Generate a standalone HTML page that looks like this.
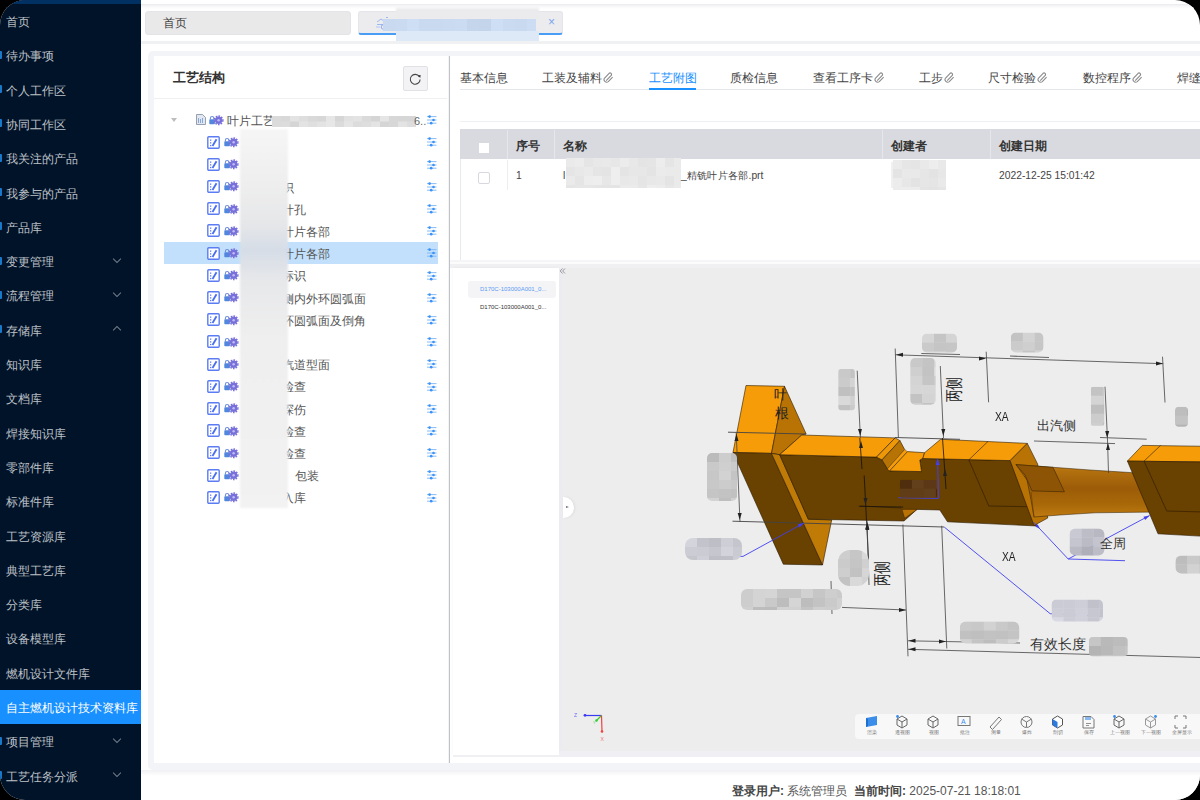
<!DOCTYPE html><html><head><meta charset="utf-8"><title>工艺附图</title><style>
*{box-sizing:border-box;margin:0;padding:0}
html,body{width:1200px;height:800px;overflow:hidden;background:#000;font-family:"Liberation Sans",sans-serif}
#app{position:absolute;left:0;top:0;width:1200px;height:800px;border-radius:25px;overflow:hidden;background:#fff}
.a{position:absolute}
i{display:inline-block;width:1em;text-align:center;font-style:normal}
#side{position:absolute;left:0;top:0;width:141px;height:800px;background:#001329;overflow:hidden}
.mi{position:absolute;left:6px;font-size:12px;line-height:14px;color:rgba(255,255,255,.74);white-space:nowrap}
.chev{position:absolute;left:114px;width:6px;height:6px;border-right:1px solid rgba(255,255,255,.45);border-bottom:1px solid rgba(255,255,255,.45);transform:rotate(45deg)}
.chev.up{transform:rotate(-135deg)}
.ico{position:absolute;left:0;width:2px;height:8px;background:#1a78c8;border-radius:0 1px 1px 0}
.t{position:absolute;white-space:nowrap;font-size:12px;line-height:14px;color:#333}
.sl{position:absolute;left:427px;width:11px;height:10px}
</style></head><body><div id="app">
<div id="side"><div class="a" style="left:0;top:0;width:141px;height:4px;background:#003162"></div>
<div class="mi" style="top:15.0px"><i>首</i><i>页</i></div>
<div class="mi" style="top:49.3px"><i>待</i><i>办</i><i>事</i><i>项</i></div>
<div class="ico" style="top:50.8px"></div>
<div class="mi" style="top:83.6px"><i>个</i><i>人</i><i>工</i><i>作</i><i>区</i></div>
<div class="ico" style="top:85.1px"></div>
<div class="mi" style="top:117.9px"><i>协</i><i>同</i><i>工</i><i>作</i><i>区</i></div>
<div class="ico" style="top:119.4px"></div>
<div class="mi" style="top:152.2px"><i>我</i><i>关</i><i>注</i><i>的</i><i>产</i><i>品</i></div>
<div class="ico" style="top:153.7px"></div>
<div class="mi" style="top:186.5px"><i>我</i><i>参</i><i>与</i><i>的</i><i>产</i><i>品</i></div>
<div class="ico" style="top:188.0px"></div>
<div class="mi" style="top:220.8px"><i>产</i><i>品</i><i>库</i></div>
<div class="ico" style="top:222.3px"></div>
<div class="mi" style="top:255.1px"><i>变</i><i>更</i><i>管</i><i>理</i></div>
<div class="ico" style="top:256.6px"></div>
<div class="chev" style="top:255.6px"></div>
<div class="mi" style="top:289.4px"><i>流</i><i>程</i><i>管</i><i>理</i></div>
<div class="ico" style="top:290.9px"></div>
<div class="chev" style="top:289.9px"></div>
<div class="mi" style="top:323.7px"><i>存</i><i>储</i><i>库</i></div>
<div class="ico" style="top:325.2px"></div>
<div class="chev up" style="top:327.2px"></div>
<div class="mi" style="top:358.0px"><i>知</i><i>识</i><i>库</i></div>
<div class="mi" style="top:392.3px"><i>文</i><i>档</i><i>库</i></div>
<div class="mi" style="top:426.6px"><i>焊</i><i>接</i><i>知</i><i>识</i><i>库</i></div>
<div class="mi" style="top:460.9px"><i>零</i><i>部</i><i>件</i><i>库</i></div>
<div class="mi" style="top:495.2px"><i>标</i><i>准</i><i>件</i><i>库</i></div>
<div class="mi" style="top:529.5px"><i>工</i><i>艺</i><i>资</i><i>源</i><i>库</i></div>
<div class="mi" style="top:563.8px"><i>典</i><i>型</i><i>工</i><i>艺</i><i>库</i></div>
<div class="mi" style="top:598.1px"><i>分</i><i>类</i><i>库</i></div>
<div class="mi" style="top:632.4px"><i>设</i><i>备</i><i>模</i><i>型</i><i>库</i></div>
<div class="mi" style="top:666.7px"><i>燃</i><i>机</i><i>设</i><i>计</i><i>文</i><i>件</i><i>库</i></div>
<div class="a" style="left:0;top:689.5px;width:141px;height:34px;background:#1890ff"></div>
<div class="mi" style="top:701.0px;color:#fff"><i>自</i><i>主</i><i>燃</i><i>机</i><i>设</i><i>计</i><i>技</i><i>术</i><i>资</i><i>料</i><i>库</i></div>
<div class="mi" style="top:735.3px"><i>项</i><i>目</i><i>管</i><i>理</i></div>
<div class="ico" style="top:736.8px"></div>
<div class="chev" style="top:735.8px"></div>
<div class="mi" style="top:769.6px"><i>工</i><i>艺</i><i>任</i><i>务</i><i>分</i><i>派</i></div>
<div class="ico" style="top:771.1px"></div>
<div class="chev" style="top:770.1px"></div>
</div>
<div class="a" style="left:141px;top:3.5px;width:1059px;height:5px;background:linear-gradient(180deg,#eaebee,#f6f6f8 40%,#fff)"></div>
<div class="a" style="left:145px;top:11px;width:206px;height:24px;background:#e9e9e9;border-radius:3px;border:1px solid #e4e4e8"></div>
<div class="t" style="left:163px;top:16px;color:#444"><i>首</i><i>页</i></div>
<div class="a" style="left:358px;top:11px;width:205px;height:24px;background:#ececee;border-radius:3px;border:1px solid #e4e4ea;border-bottom:2px solid #4a9df5"></div>
<div class="a" style="left:548px;top:15px;font-size:12px;line-height:14px;color:#7aa6f0">×</div>
<svg class="a" style="left:375px;top:16px" width="18" height="14"><path d="M2 6 L6 3 L10 6 M2 8.5 H9" fill="none" stroke="#9bb8f2" stroke-width="1"/><path d="M11 1.5 H13" stroke="#9bb8f2" stroke-width="1"/><circle cx="8.5" cy="11" r="2.3" fill="none" stroke="#8fa8f0" stroke-width="1"/><path d="M1 11 H5" stroke="#b0c4f4" stroke-width="1"/><rect x="14.5" y="8" width="2.5" height="5" fill="#6f93ea"/></svg>
<div class="a" style="left:396px;top:8px;width:143px;height:11px;background:#ebebed;filter:blur(1px)"></div>
<svg class="a" style="left:383.0px;top:19.0px;filter:blur(0.3px)" width="153.0" height="12.0"><rect x="0.0" y="0.0" width="12.5" height="12.5" fill="rgb(201,217,240)"/><rect x="12.0" y="0.0" width="12.5" height="12.5" fill="rgb(202,218,241)"/><rect x="24.0" y="0.0" width="12.5" height="12.5" fill="rgb(206,222,245)"/><rect x="36.0" y="0.0" width="12.5" height="12.5" fill="rgb(201,217,240)"/><rect x="48.0" y="0.0" width="12.5" height="12.5" fill="rgb(201,217,240)"/><rect x="60.0" y="0.0" width="12.5" height="12.5" fill="rgb(202,218,241)"/><rect x="72.0" y="0.0" width="12.5" height="12.5" fill="rgb(203,219,242)"/><rect x="84.0" y="0.0" width="12.5" height="12.5" fill="rgb(197,213,236)"/><rect x="96.0" y="0.0" width="12.5" height="12.5" fill="rgb(196,212,235)"/><rect x="108.0" y="0.0" width="12.5" height="12.5" fill="rgb(206,222,245)"/><rect x="120.0" y="0.0" width="12.5" height="12.5" fill="rgb(202,218,241)"/><rect x="132.0" y="0.0" width="12.5" height="12.5" fill="rgb(201,217,240)"/><rect x="144.0" y="0.0" width="12.5" height="12.5" fill="rgb(204,220,243)"/></svg>
<div class="a" style="left:396px;top:31px;width:143px;height:11px;background:#dde9f7;filter:blur(.6px)"></div>
<div class="a" style="left:141px;top:41px;width:1059px;height:3px;background:#f0f1f3"></div>
<div class="a" style="left:148px;top:51px;width:1060px;height:719px;background:#f3f4f7;border-radius:5px"></div>
<div class="a" style="left:154px;top:56px;width:294px;height:707px;background:#fff"></div>
<div class="t" style="left:173px;top:70px;font-size:13px;line-height:15px;font-weight:bold;color:#333"><i>工</i><i>艺</i><i>结</i><i>构</i></div>
<div class="a" style="left:403px;top:66px;width:25px;height:25px;background:#f3f3f5;border:1px solid #e0e1e5;border-radius:2px"></div>
<svg class="a" style="left:403px;top:66px" width="25" height="25"><path d="M16.3 10.6 A4.9 4.9 0 1 0 17.1 13.4" fill="none" stroke="#484848" stroke-width="1.1"/><path d="M14.8 9.6 L17.6 9.1 L17.3 11.9 Z" fill="#333"/></svg>
<div class="a" style="left:154px;top:98px;width:293px;height:1px;background:#eef0f4"></div>
<div class="a" style="left:171px;top:118px;width:0;height:0;border-left:3.5px solid transparent;border-right:3.5px solid transparent;border-top:4.5px solid #bdbdbd"></div>
<svg class="a" style="left:196px;top:114px" width="10" height="11"><path d="M0.5 0.5H6.5L9.5 3.5V10.5H0.5Z" fill="#e3e8f0" stroke="#8a96a8" stroke-width="0.9"/><path d="M2.5 4V9M4.5 5V9M6.5 4V9" stroke="#7da0d8" stroke-width="0.9"/></svg>
<svg class="a" style="left:208.5px;top:115.0px" width="15" height="11"><rect x="0.3" y="4.3" width="5.6" height="5" rx="0.8" fill="#5286de"/><path d="M1.4 4.6 V3.2 A1.7 1.7 0 0 1 4.8 3.2 V4.6" fill="none" stroke="#6d8fd8" stroke-width="1.1"/><circle cx="9.6" cy="5.3" r="3.7" fill="#7870da"/><circle cx="9.6" cy="5.3" r="4.3" fill="none" stroke="#7870da" stroke-width="1.4" stroke-dasharray="1.6 1.2"/><circle cx="9.6" cy="5.3" r="1.2" fill="#c0bcf2"/></svg>
<div class="t" style="left:227px;top:113.5px;color:#555"><i>叶</i><i>片</i><i>工</i><i>艺</i></div>
<svg class="a" style="left:272.0px;top:116.0px;filter:blur(0.3px)" width="144.0" height="11.0"><rect x="0.0" y="0.0" width="9.5" height="6.0" fill="rgb(218,218,218)"/><rect x="9.0" y="0.0" width="9.5" height="6.0" fill="rgb(216,216,216)"/><rect x="18.0" y="0.0" width="9.5" height="6.0" fill="rgb(227,227,227)"/><rect x="27.0" y="0.0" width="9.5" height="6.0" fill="rgb(222,222,222)"/><rect x="36.0" y="0.0" width="9.5" height="6.0" fill="rgb(217,217,217)"/><rect x="45.0" y="0.0" width="9.5" height="6.0" fill="rgb(215,215,215)"/><rect x="54.0" y="0.0" width="9.5" height="6.0" fill="rgb(230,230,230)"/><rect x="63.0" y="0.0" width="9.5" height="6.0" fill="rgb(214,214,214)"/><rect x="72.0" y="0.0" width="9.5" height="6.0" fill="rgb(225,225,225)"/><rect x="81.0" y="0.0" width="9.5" height="6.0" fill="rgb(227,227,227)"/><rect x="90.0" y="0.0" width="9.5" height="6.0" fill="rgb(218,218,218)"/><rect x="99.0" y="0.0" width="9.5" height="6.0" fill="rgb(213,213,213)"/><rect x="108.0" y="0.0" width="9.5" height="6.0" fill="rgb(229,229,229)"/><rect x="117.0" y="0.0" width="9.5" height="6.0" fill="rgb(215,215,215)"/><rect x="126.0" y="0.0" width="9.5" height="6.0" fill="rgb(214,214,214)"/><rect x="135.0" y="0.0" width="9.5" height="6.0" fill="rgb(214,214,214)"/><rect x="0.0" y="5.5" width="9.5" height="6.0" fill="rgb(219,219,219)"/><rect x="9.0" y="5.5" width="9.5" height="6.0" fill="rgb(220,220,220)"/><rect x="18.0" y="5.5" width="9.5" height="6.0" fill="rgb(213,213,213)"/><rect x="27.0" y="5.5" width="9.5" height="6.0" fill="rgb(227,227,227)"/><rect x="36.0" y="5.5" width="9.5" height="6.0" fill="rgb(223,223,223)"/><rect x="45.0" y="5.5" width="9.5" height="6.0" fill="rgb(227,227,227)"/><rect x="54.0" y="5.5" width="9.5" height="6.0" fill="rgb(231,231,231)"/><rect x="63.0" y="5.5" width="9.5" height="6.0" fill="rgb(219,219,219)"/><rect x="72.0" y="5.5" width="9.5" height="6.0" fill="rgb(229,229,229)"/><rect x="81.0" y="5.5" width="9.5" height="6.0" fill="rgb(220,220,220)"/><rect x="90.0" y="5.5" width="9.5" height="6.0" fill="rgb(222,222,222)"/><rect x="99.0" y="5.5" width="9.5" height="6.0" fill="rgb(228,228,228)"/><rect x="108.0" y="5.5" width="9.5" height="6.0" fill="rgb(213,213,213)"/><rect x="117.0" y="5.5" width="9.5" height="6.0" fill="rgb(215,215,215)"/><rect x="126.0" y="5.5" width="9.5" height="6.0" fill="rgb(227,227,227)"/><rect x="135.0" y="5.5" width="9.5" height="6.0" fill="rgb(221,221,221)"/></svg>
<div class="t" style="left:414px;top:113.5px;color:#666;font-size:11px">6..</div>
<svg class="sl" style="top:115.2px" width="11" height="10"><g stroke="#79b4f8" stroke-width="0.9"><path d="M0 1.6H9.5M0 5H9.5M0 8.2H9.5"/></g><g fill="#3d92f5"><circle cx="2.6" cy="1.6" r="1.35"/><circle cx="6.5" cy="5" r="1.35"/><circle cx="4.2" cy="8.2" r="1.35"/></g></svg>
<svg class="a" style="left:207px;top:135.6px" width="13" height="13"><rect x="0.8" y="0.8" width="11.4" height="11.4" rx="1" fill="#fff" stroke="#5b7cf2" stroke-width="1.4"/><rect x="3" y="3.5" width="1.3" height="1.3" fill="#5b7cf2"/><rect x="3" y="6.2" width="1.3" height="1.3" fill="#5b7cf2"/><rect x="3" y="8.9" width="1.3" height="1.3" fill="#5b7cf2"/><path d="M5.5 10 L9.5 3.2" stroke="#4a6ef0" stroke-width="1.8"/></svg>
<svg class="a" style="left:224.0px;top:136.9px" width="15" height="11"><rect x="0.3" y="4.3" width="5.6" height="5" rx="0.8" fill="#5286de"/><path d="M1.4 4.6 V3.2 A1.7 1.7 0 0 1 4.8 3.2 V4.6" fill="none" stroke="#6d8fd8" stroke-width="1.1"/><circle cx="9.6" cy="5.3" r="3.7" fill="#7870da"/><circle cx="9.6" cy="5.3" r="4.3" fill="none" stroke="#7870da" stroke-width="1.4" stroke-dasharray="1.6 1.2"/><circle cx="9.6" cy="5.3" r="1.2" fill="#c0bcf2"/></svg>
<svg class="sl" style="top:137.4px" width="11" height="10"><g stroke="#79b4f8" stroke-width="0.9"><path d="M0 1.6H9.5M0 5H9.5M0 8.2H9.5"/></g><g fill="#3d92f5"><circle cx="2.6" cy="1.6" r="1.35"/><circle cx="6.5" cy="5" r="1.35"/><circle cx="4.2" cy="8.2" r="1.35"/></g></svg>
<svg class="a" style="left:207px;top:157.8px" width="13" height="13"><rect x="0.8" y="0.8" width="11.4" height="11.4" rx="1" fill="#fff" stroke="#5b7cf2" stroke-width="1.4"/><rect x="3" y="3.5" width="1.3" height="1.3" fill="#5b7cf2"/><rect x="3" y="6.2" width="1.3" height="1.3" fill="#5b7cf2"/><rect x="3" y="8.9" width="1.3" height="1.3" fill="#5b7cf2"/><path d="M5.5 10 L9.5 3.2" stroke="#4a6ef0" stroke-width="1.8"/></svg>
<svg class="a" style="left:224.0px;top:159.1px" width="15" height="11"><rect x="0.3" y="4.3" width="5.6" height="5" rx="0.8" fill="#5286de"/><path d="M1.4 4.6 V3.2 A1.7 1.7 0 0 1 4.8 3.2 V4.6" fill="none" stroke="#6d8fd8" stroke-width="1.1"/><circle cx="9.6" cy="5.3" r="3.7" fill="#7870da"/><circle cx="9.6" cy="5.3" r="4.3" fill="none" stroke="#7870da" stroke-width="1.4" stroke-dasharray="1.6 1.2"/><circle cx="9.6" cy="5.3" r="1.2" fill="#c0bcf2"/></svg>
<svg class="sl" style="top:159.6px" width="11" height="10"><g stroke="#79b4f8" stroke-width="0.9"><path d="M0 1.6H9.5M0 5H9.5M0 8.2H9.5"/></g><g fill="#3d92f5"><circle cx="2.6" cy="1.6" r="1.35"/><circle cx="6.5" cy="5" r="1.35"/><circle cx="4.2" cy="8.2" r="1.35"/></g></svg>
<svg class="a" style="left:207px;top:180.0px" width="13" height="13"><rect x="0.8" y="0.8" width="11.4" height="11.4" rx="1" fill="#fff" stroke="#5b7cf2" stroke-width="1.4"/><rect x="3" y="3.5" width="1.3" height="1.3" fill="#5b7cf2"/><rect x="3" y="6.2" width="1.3" height="1.3" fill="#5b7cf2"/><rect x="3" y="8.9" width="1.3" height="1.3" fill="#5b7cf2"/><path d="M5.5 10 L9.5 3.2" stroke="#4a6ef0" stroke-width="1.8"/></svg>
<svg class="a" style="left:224.0px;top:181.3px" width="15" height="11"><rect x="0.3" y="4.3" width="5.6" height="5" rx="0.8" fill="#5286de"/><path d="M1.4 4.6 V3.2 A1.7 1.7 0 0 1 4.8 3.2 V4.6" fill="none" stroke="#6d8fd8" stroke-width="1.1"/><circle cx="9.6" cy="5.3" r="3.7" fill="#7870da"/><circle cx="9.6" cy="5.3" r="4.3" fill="none" stroke="#7870da" stroke-width="1.4" stroke-dasharray="1.6 1.2"/><circle cx="9.6" cy="5.3" r="1.2" fill="#c0bcf2"/></svg>
<div class="t" style="left:282.4px;top:180.6px;color:#555"><i>识</i></div>
<svg class="sl" style="top:181.8px" width="11" height="10"><g stroke="#79b4f8" stroke-width="0.9"><path d="M0 1.6H9.5M0 5H9.5M0 8.2H9.5"/></g><g fill="#3d92f5"><circle cx="2.6" cy="1.6" r="1.35"/><circle cx="6.5" cy="5" r="1.35"/><circle cx="4.2" cy="8.2" r="1.35"/></g></svg>
<svg class="a" style="left:207px;top:202.2px" width="13" height="13"><rect x="0.8" y="0.8" width="11.4" height="11.4" rx="1" fill="#fff" stroke="#5b7cf2" stroke-width="1.4"/><rect x="3" y="3.5" width="1.3" height="1.3" fill="#5b7cf2"/><rect x="3" y="6.2" width="1.3" height="1.3" fill="#5b7cf2"/><rect x="3" y="8.9" width="1.3" height="1.3" fill="#5b7cf2"/><path d="M5.5 10 L9.5 3.2" stroke="#4a6ef0" stroke-width="1.8"/></svg>
<svg class="a" style="left:224.0px;top:203.5px" width="15" height="11"><rect x="0.3" y="4.3" width="5.6" height="5" rx="0.8" fill="#5286de"/><path d="M1.4 4.6 V3.2 A1.7 1.7 0 0 1 4.8 3.2 V4.6" fill="none" stroke="#6d8fd8" stroke-width="1.1"/><circle cx="9.6" cy="5.3" r="3.7" fill="#7870da"/><circle cx="9.6" cy="5.3" r="4.3" fill="none" stroke="#7870da" stroke-width="1.4" stroke-dasharray="1.6 1.2"/><circle cx="9.6" cy="5.3" r="1.2" fill="#c0bcf2"/></svg>
<div class="t" style="left:282.4px;top:202.8px;color:#555"><i>叶</i><i>孔</i></div>
<svg class="sl" style="top:204.0px" width="11" height="10"><g stroke="#79b4f8" stroke-width="0.9"><path d="M0 1.6H9.5M0 5H9.5M0 8.2H9.5"/></g><g fill="#3d92f5"><circle cx="2.6" cy="1.6" r="1.35"/><circle cx="6.5" cy="5" r="1.35"/><circle cx="4.2" cy="8.2" r="1.35"/></g></svg>
<svg class="a" style="left:207px;top:224.4px" width="13" height="13"><rect x="0.8" y="0.8" width="11.4" height="11.4" rx="1" fill="#fff" stroke="#5b7cf2" stroke-width="1.4"/><rect x="3" y="3.5" width="1.3" height="1.3" fill="#5b7cf2"/><rect x="3" y="6.2" width="1.3" height="1.3" fill="#5b7cf2"/><rect x="3" y="8.9" width="1.3" height="1.3" fill="#5b7cf2"/><path d="M5.5 10 L9.5 3.2" stroke="#4a6ef0" stroke-width="1.8"/></svg>
<svg class="a" style="left:224.0px;top:225.7px" width="15" height="11"><rect x="0.3" y="4.3" width="5.6" height="5" rx="0.8" fill="#5286de"/><path d="M1.4 4.6 V3.2 A1.7 1.7 0 0 1 4.8 3.2 V4.6" fill="none" stroke="#6d8fd8" stroke-width="1.1"/><circle cx="9.6" cy="5.3" r="3.7" fill="#7870da"/><circle cx="9.6" cy="5.3" r="4.3" fill="none" stroke="#7870da" stroke-width="1.4" stroke-dasharray="1.6 1.2"/><circle cx="9.6" cy="5.3" r="1.2" fill="#c0bcf2"/></svg>
<div class="t" style="left:282.4px;top:225.0px;color:#555"><i>叶</i><i>片</i><i>各</i><i>部</i></div>
<svg class="sl" style="top:226.2px" width="11" height="10"><g stroke="#79b4f8" stroke-width="0.9"><path d="M0 1.6H9.5M0 5H9.5M0 8.2H9.5"/></g><g fill="#3d92f5"><circle cx="2.6" cy="1.6" r="1.35"/><circle cx="6.5" cy="5" r="1.35"/><circle cx="4.2" cy="8.2" r="1.35"/></g></svg>
<div class="a" style="left:164px;top:241.7px;width:274px;height:22px;background:#c2e0fc"></div>
<svg class="a" style="left:207px;top:246.6px" width="13" height="13"><rect x="0.8" y="0.8" width="11.4" height="11.4" rx="1" fill="#fff" stroke="#5b7cf2" stroke-width="1.4"/><rect x="3" y="3.5" width="1.3" height="1.3" fill="#5b7cf2"/><rect x="3" y="6.2" width="1.3" height="1.3" fill="#5b7cf2"/><rect x="3" y="8.9" width="1.3" height="1.3" fill="#5b7cf2"/><path d="M5.5 10 L9.5 3.2" stroke="#4a6ef0" stroke-width="1.8"/></svg>
<svg class="a" style="left:224.0px;top:247.9px" width="15" height="11"><rect x="0.3" y="4.3" width="5.6" height="5" rx="0.8" fill="#5286de"/><path d="M1.4 4.6 V3.2 A1.7 1.7 0 0 1 4.8 3.2 V4.6" fill="none" stroke="#6d8fd8" stroke-width="1.1"/><circle cx="9.6" cy="5.3" r="3.7" fill="#7870da"/><circle cx="9.6" cy="5.3" r="4.3" fill="none" stroke="#7870da" stroke-width="1.4" stroke-dasharray="1.6 1.2"/><circle cx="9.6" cy="5.3" r="1.2" fill="#c0bcf2"/></svg>
<div class="t" style="left:282.4px;top:247.2px;color:#555"><i>叶</i><i>片</i><i>各</i><i>部</i></div>
<svg class="sl" style="top:248.4px" width="11" height="10"><g stroke="#79b4f8" stroke-width="0.9"><path d="M0 1.6H9.5M0 5H9.5M0 8.2H9.5"/></g><g fill="#3d92f5"><circle cx="2.6" cy="1.6" r="1.35"/><circle cx="6.5" cy="5" r="1.35"/><circle cx="4.2" cy="8.2" r="1.35"/></g></svg>
<svg class="a" style="left:207px;top:268.8px" width="13" height="13"><rect x="0.8" y="0.8" width="11.4" height="11.4" rx="1" fill="#fff" stroke="#5b7cf2" stroke-width="1.4"/><rect x="3" y="3.5" width="1.3" height="1.3" fill="#5b7cf2"/><rect x="3" y="6.2" width="1.3" height="1.3" fill="#5b7cf2"/><rect x="3" y="8.9" width="1.3" height="1.3" fill="#5b7cf2"/><path d="M5.5 10 L9.5 3.2" stroke="#4a6ef0" stroke-width="1.8"/></svg>
<svg class="a" style="left:224.0px;top:270.1px" width="15" height="11"><rect x="0.3" y="4.3" width="5.6" height="5" rx="0.8" fill="#5286de"/><path d="M1.4 4.6 V3.2 A1.7 1.7 0 0 1 4.8 3.2 V4.6" fill="none" stroke="#6d8fd8" stroke-width="1.1"/><circle cx="9.6" cy="5.3" r="3.7" fill="#7870da"/><circle cx="9.6" cy="5.3" r="4.3" fill="none" stroke="#7870da" stroke-width="1.4" stroke-dasharray="1.6 1.2"/><circle cx="9.6" cy="5.3" r="1.2" fill="#c0bcf2"/></svg>
<div class="t" style="left:282.4px;top:269.4px;color:#555"><i>标</i><i>识</i></div>
<svg class="sl" style="top:270.6px" width="11" height="10"><g stroke="#79b4f8" stroke-width="0.9"><path d="M0 1.6H9.5M0 5H9.5M0 8.2H9.5"/></g><g fill="#3d92f5"><circle cx="2.6" cy="1.6" r="1.35"/><circle cx="6.5" cy="5" r="1.35"/><circle cx="4.2" cy="8.2" r="1.35"/></g></svg>
<svg class="a" style="left:207px;top:291.0px" width="13" height="13"><rect x="0.8" y="0.8" width="11.4" height="11.4" rx="1" fill="#fff" stroke="#5b7cf2" stroke-width="1.4"/><rect x="3" y="3.5" width="1.3" height="1.3" fill="#5b7cf2"/><rect x="3" y="6.2" width="1.3" height="1.3" fill="#5b7cf2"/><rect x="3" y="8.9" width="1.3" height="1.3" fill="#5b7cf2"/><path d="M5.5 10 L9.5 3.2" stroke="#4a6ef0" stroke-width="1.8"/></svg>
<svg class="a" style="left:224.0px;top:292.3px" width="15" height="11"><rect x="0.3" y="4.3" width="5.6" height="5" rx="0.8" fill="#5286de"/><path d="M1.4 4.6 V3.2 A1.7 1.7 0 0 1 4.8 3.2 V4.6" fill="none" stroke="#6d8fd8" stroke-width="1.1"/><circle cx="9.6" cy="5.3" r="3.7" fill="#7870da"/><circle cx="9.6" cy="5.3" r="4.3" fill="none" stroke="#7870da" stroke-width="1.4" stroke-dasharray="1.6 1.2"/><circle cx="9.6" cy="5.3" r="1.2" fill="#c0bcf2"/></svg>
<div class="t" style="left:282.4px;top:291.6px;color:#555"><i>侧</i><i>内</i><i>外</i><i>环</i><i>圆</i><i>弧</i><i>面</i></div>
<svg class="sl" style="top:292.8px" width="11" height="10"><g stroke="#79b4f8" stroke-width="0.9"><path d="M0 1.6H9.5M0 5H9.5M0 8.2H9.5"/></g><g fill="#3d92f5"><circle cx="2.6" cy="1.6" r="1.35"/><circle cx="6.5" cy="5" r="1.35"/><circle cx="4.2" cy="8.2" r="1.35"/></g></svg>
<svg class="a" style="left:207px;top:313.2px" width="13" height="13"><rect x="0.8" y="0.8" width="11.4" height="11.4" rx="1" fill="#fff" stroke="#5b7cf2" stroke-width="1.4"/><rect x="3" y="3.5" width="1.3" height="1.3" fill="#5b7cf2"/><rect x="3" y="6.2" width="1.3" height="1.3" fill="#5b7cf2"/><rect x="3" y="8.9" width="1.3" height="1.3" fill="#5b7cf2"/><path d="M5.5 10 L9.5 3.2" stroke="#4a6ef0" stroke-width="1.8"/></svg>
<svg class="a" style="left:224.0px;top:314.5px" width="15" height="11"><rect x="0.3" y="4.3" width="5.6" height="5" rx="0.8" fill="#5286de"/><path d="M1.4 4.6 V3.2 A1.7 1.7 0 0 1 4.8 3.2 V4.6" fill="none" stroke="#6d8fd8" stroke-width="1.1"/><circle cx="9.6" cy="5.3" r="3.7" fill="#7870da"/><circle cx="9.6" cy="5.3" r="4.3" fill="none" stroke="#7870da" stroke-width="1.4" stroke-dasharray="1.6 1.2"/><circle cx="9.6" cy="5.3" r="1.2" fill="#c0bcf2"/></svg>
<div class="t" style="left:282.4px;top:313.8px;color:#555"><i>环</i><i>圆</i><i>弧</i><i>面</i><i>及</i><i>倒</i><i>角</i></div>
<svg class="sl" style="top:315.0px" width="11" height="10"><g stroke="#79b4f8" stroke-width="0.9"><path d="M0 1.6H9.5M0 5H9.5M0 8.2H9.5"/></g><g fill="#3d92f5"><circle cx="2.6" cy="1.6" r="1.35"/><circle cx="6.5" cy="5" r="1.35"/><circle cx="4.2" cy="8.2" r="1.35"/></g></svg>
<svg class="a" style="left:207px;top:335.4px" width="13" height="13"><rect x="0.8" y="0.8" width="11.4" height="11.4" rx="1" fill="#fff" stroke="#5b7cf2" stroke-width="1.4"/><rect x="3" y="3.5" width="1.3" height="1.3" fill="#5b7cf2"/><rect x="3" y="6.2" width="1.3" height="1.3" fill="#5b7cf2"/><rect x="3" y="8.9" width="1.3" height="1.3" fill="#5b7cf2"/><path d="M5.5 10 L9.5 3.2" stroke="#4a6ef0" stroke-width="1.8"/></svg>
<svg class="a" style="left:224.0px;top:336.7px" width="15" height="11"><rect x="0.3" y="4.3" width="5.6" height="5" rx="0.8" fill="#5286de"/><path d="M1.4 4.6 V3.2 A1.7 1.7 0 0 1 4.8 3.2 V4.6" fill="none" stroke="#6d8fd8" stroke-width="1.1"/><circle cx="9.6" cy="5.3" r="3.7" fill="#7870da"/><circle cx="9.6" cy="5.3" r="4.3" fill="none" stroke="#7870da" stroke-width="1.4" stroke-dasharray="1.6 1.2"/><circle cx="9.6" cy="5.3" r="1.2" fill="#c0bcf2"/></svg>
<svg class="sl" style="top:337.2px" width="11" height="10"><g stroke="#79b4f8" stroke-width="0.9"><path d="M0 1.6H9.5M0 5H9.5M0 8.2H9.5"/></g><g fill="#3d92f5"><circle cx="2.6" cy="1.6" r="1.35"/><circle cx="6.5" cy="5" r="1.35"/><circle cx="4.2" cy="8.2" r="1.35"/></g></svg>
<svg class="a" style="left:207px;top:357.6px" width="13" height="13"><rect x="0.8" y="0.8" width="11.4" height="11.4" rx="1" fill="#fff" stroke="#5b7cf2" stroke-width="1.4"/><rect x="3" y="3.5" width="1.3" height="1.3" fill="#5b7cf2"/><rect x="3" y="6.2" width="1.3" height="1.3" fill="#5b7cf2"/><rect x="3" y="8.9" width="1.3" height="1.3" fill="#5b7cf2"/><path d="M5.5 10 L9.5 3.2" stroke="#4a6ef0" stroke-width="1.8"/></svg>
<svg class="a" style="left:224.0px;top:358.9px" width="15" height="11"><rect x="0.3" y="4.3" width="5.6" height="5" rx="0.8" fill="#5286de"/><path d="M1.4 4.6 V3.2 A1.7 1.7 0 0 1 4.8 3.2 V4.6" fill="none" stroke="#6d8fd8" stroke-width="1.1"/><circle cx="9.6" cy="5.3" r="3.7" fill="#7870da"/><circle cx="9.6" cy="5.3" r="4.3" fill="none" stroke="#7870da" stroke-width="1.4" stroke-dasharray="1.6 1.2"/><circle cx="9.6" cy="5.3" r="1.2" fill="#c0bcf2"/></svg>
<div class="t" style="left:282.4px;top:358.2px;color:#555"><i>汽</i><i>道</i><i>型</i><i>面</i></div>
<svg class="sl" style="top:359.4px" width="11" height="10"><g stroke="#79b4f8" stroke-width="0.9"><path d="M0 1.6H9.5M0 5H9.5M0 8.2H9.5"/></g><g fill="#3d92f5"><circle cx="2.6" cy="1.6" r="1.35"/><circle cx="6.5" cy="5" r="1.35"/><circle cx="4.2" cy="8.2" r="1.35"/></g></svg>
<svg class="a" style="left:207px;top:379.8px" width="13" height="13"><rect x="0.8" y="0.8" width="11.4" height="11.4" rx="1" fill="#fff" stroke="#5b7cf2" stroke-width="1.4"/><rect x="3" y="3.5" width="1.3" height="1.3" fill="#5b7cf2"/><rect x="3" y="6.2" width="1.3" height="1.3" fill="#5b7cf2"/><rect x="3" y="8.9" width="1.3" height="1.3" fill="#5b7cf2"/><path d="M5.5 10 L9.5 3.2" stroke="#4a6ef0" stroke-width="1.8"/></svg>
<svg class="a" style="left:224.0px;top:381.1px" width="15" height="11"><rect x="0.3" y="4.3" width="5.6" height="5" rx="0.8" fill="#5286de"/><path d="M1.4 4.6 V3.2 A1.7 1.7 0 0 1 4.8 3.2 V4.6" fill="none" stroke="#6d8fd8" stroke-width="1.1"/><circle cx="9.6" cy="5.3" r="3.7" fill="#7870da"/><circle cx="9.6" cy="5.3" r="4.3" fill="none" stroke="#7870da" stroke-width="1.4" stroke-dasharray="1.6 1.2"/><circle cx="9.6" cy="5.3" r="1.2" fill="#c0bcf2"/></svg>
<div class="t" style="left:282.4px;top:380.4px;color:#555"><i>检</i><i>查</i></div>
<svg class="sl" style="top:381.6px" width="11" height="10"><g stroke="#79b4f8" stroke-width="0.9"><path d="M0 1.6H9.5M0 5H9.5M0 8.2H9.5"/></g><g fill="#3d92f5"><circle cx="2.6" cy="1.6" r="1.35"/><circle cx="6.5" cy="5" r="1.35"/><circle cx="4.2" cy="8.2" r="1.35"/></g></svg>
<svg class="a" style="left:207px;top:402.0px" width="13" height="13"><rect x="0.8" y="0.8" width="11.4" height="11.4" rx="1" fill="#fff" stroke="#5b7cf2" stroke-width="1.4"/><rect x="3" y="3.5" width="1.3" height="1.3" fill="#5b7cf2"/><rect x="3" y="6.2" width="1.3" height="1.3" fill="#5b7cf2"/><rect x="3" y="8.9" width="1.3" height="1.3" fill="#5b7cf2"/><path d="M5.5 10 L9.5 3.2" stroke="#4a6ef0" stroke-width="1.8"/></svg>
<svg class="a" style="left:224.0px;top:403.3px" width="15" height="11"><rect x="0.3" y="4.3" width="5.6" height="5" rx="0.8" fill="#5286de"/><path d="M1.4 4.6 V3.2 A1.7 1.7 0 0 1 4.8 3.2 V4.6" fill="none" stroke="#6d8fd8" stroke-width="1.1"/><circle cx="9.6" cy="5.3" r="3.7" fill="#7870da"/><circle cx="9.6" cy="5.3" r="4.3" fill="none" stroke="#7870da" stroke-width="1.4" stroke-dasharray="1.6 1.2"/><circle cx="9.6" cy="5.3" r="1.2" fill="#c0bcf2"/></svg>
<div class="t" style="left:282.4px;top:402.6px;color:#555"><i>探</i><i>伤</i></div>
<svg class="sl" style="top:403.8px" width="11" height="10"><g stroke="#79b4f8" stroke-width="0.9"><path d="M0 1.6H9.5M0 5H9.5M0 8.2H9.5"/></g><g fill="#3d92f5"><circle cx="2.6" cy="1.6" r="1.35"/><circle cx="6.5" cy="5" r="1.35"/><circle cx="4.2" cy="8.2" r="1.35"/></g></svg>
<svg class="a" style="left:207px;top:424.2px" width="13" height="13"><rect x="0.8" y="0.8" width="11.4" height="11.4" rx="1" fill="#fff" stroke="#5b7cf2" stroke-width="1.4"/><rect x="3" y="3.5" width="1.3" height="1.3" fill="#5b7cf2"/><rect x="3" y="6.2" width="1.3" height="1.3" fill="#5b7cf2"/><rect x="3" y="8.9" width="1.3" height="1.3" fill="#5b7cf2"/><path d="M5.5 10 L9.5 3.2" stroke="#4a6ef0" stroke-width="1.8"/></svg>
<svg class="a" style="left:224.0px;top:425.5px" width="15" height="11"><rect x="0.3" y="4.3" width="5.6" height="5" rx="0.8" fill="#5286de"/><path d="M1.4 4.6 V3.2 A1.7 1.7 0 0 1 4.8 3.2 V4.6" fill="none" stroke="#6d8fd8" stroke-width="1.1"/><circle cx="9.6" cy="5.3" r="3.7" fill="#7870da"/><circle cx="9.6" cy="5.3" r="4.3" fill="none" stroke="#7870da" stroke-width="1.4" stroke-dasharray="1.6 1.2"/><circle cx="9.6" cy="5.3" r="1.2" fill="#c0bcf2"/></svg>
<div class="t" style="left:282.4px;top:424.8px;color:#555"><i>检</i><i>查</i></div>
<svg class="sl" style="top:426.0px" width="11" height="10"><g stroke="#79b4f8" stroke-width="0.9"><path d="M0 1.6H9.5M0 5H9.5M0 8.2H9.5"/></g><g fill="#3d92f5"><circle cx="2.6" cy="1.6" r="1.35"/><circle cx="6.5" cy="5" r="1.35"/><circle cx="4.2" cy="8.2" r="1.35"/></g></svg>
<svg class="a" style="left:207px;top:446.4px" width="13" height="13"><rect x="0.8" y="0.8" width="11.4" height="11.4" rx="1" fill="#fff" stroke="#5b7cf2" stroke-width="1.4"/><rect x="3" y="3.5" width="1.3" height="1.3" fill="#5b7cf2"/><rect x="3" y="6.2" width="1.3" height="1.3" fill="#5b7cf2"/><rect x="3" y="8.9" width="1.3" height="1.3" fill="#5b7cf2"/><path d="M5.5 10 L9.5 3.2" stroke="#4a6ef0" stroke-width="1.8"/></svg>
<svg class="a" style="left:224.0px;top:447.7px" width="15" height="11"><rect x="0.3" y="4.3" width="5.6" height="5" rx="0.8" fill="#5286de"/><path d="M1.4 4.6 V3.2 A1.7 1.7 0 0 1 4.8 3.2 V4.6" fill="none" stroke="#6d8fd8" stroke-width="1.1"/><circle cx="9.6" cy="5.3" r="3.7" fill="#7870da"/><circle cx="9.6" cy="5.3" r="4.3" fill="none" stroke="#7870da" stroke-width="1.4" stroke-dasharray="1.6 1.2"/><circle cx="9.6" cy="5.3" r="1.2" fill="#c0bcf2"/></svg>
<div class="t" style="left:282.4px;top:447.0px;color:#555"><i>检</i><i>查</i></div>
<svg class="sl" style="top:448.2px" width="11" height="10"><g stroke="#79b4f8" stroke-width="0.9"><path d="M0 1.6H9.5M0 5H9.5M0 8.2H9.5"/></g><g fill="#3d92f5"><circle cx="2.6" cy="1.6" r="1.35"/><circle cx="6.5" cy="5" r="1.35"/><circle cx="4.2" cy="8.2" r="1.35"/></g></svg>
<svg class="a" style="left:207px;top:468.6px" width="13" height="13"><rect x="0.8" y="0.8" width="11.4" height="11.4" rx="1" fill="#fff" stroke="#5b7cf2" stroke-width="1.4"/><rect x="3" y="3.5" width="1.3" height="1.3" fill="#5b7cf2"/><rect x="3" y="6.2" width="1.3" height="1.3" fill="#5b7cf2"/><rect x="3" y="8.9" width="1.3" height="1.3" fill="#5b7cf2"/><path d="M5.5 10 L9.5 3.2" stroke="#4a6ef0" stroke-width="1.8"/></svg>
<svg class="a" style="left:224.0px;top:469.9px" width="15" height="11"><rect x="0.3" y="4.3" width="5.6" height="5" rx="0.8" fill="#5286de"/><path d="M1.4 4.6 V3.2 A1.7 1.7 0 0 1 4.8 3.2 V4.6" fill="none" stroke="#6d8fd8" stroke-width="1.1"/><circle cx="9.6" cy="5.3" r="3.7" fill="#7870da"/><circle cx="9.6" cy="5.3" r="4.3" fill="none" stroke="#7870da" stroke-width="1.4" stroke-dasharray="1.6 1.2"/><circle cx="9.6" cy="5.3" r="1.2" fill="#c0bcf2"/></svg>
<div class="t" style="left:294.5px;top:469.2px;color:#555"><i>包</i><i>装</i></div>
<svg class="sl" style="top:470.4px" width="11" height="10"><g stroke="#79b4f8" stroke-width="0.9"><path d="M0 1.6H9.5M0 5H9.5M0 8.2H9.5"/></g><g fill="#3d92f5"><circle cx="2.6" cy="1.6" r="1.35"/><circle cx="6.5" cy="5" r="1.35"/><circle cx="4.2" cy="8.2" r="1.35"/></g></svg>
<svg class="a" style="left:207px;top:490.8px" width="13" height="13"><rect x="0.8" y="0.8" width="11.4" height="11.4" rx="1" fill="#fff" stroke="#5b7cf2" stroke-width="1.4"/><rect x="3" y="3.5" width="1.3" height="1.3" fill="#5b7cf2"/><rect x="3" y="6.2" width="1.3" height="1.3" fill="#5b7cf2"/><rect x="3" y="8.9" width="1.3" height="1.3" fill="#5b7cf2"/><path d="M5.5 10 L9.5 3.2" stroke="#4a6ef0" stroke-width="1.8"/></svg>
<svg class="a" style="left:224.0px;top:492.1px" width="15" height="11"><rect x="0.3" y="4.3" width="5.6" height="5" rx="0.8" fill="#5286de"/><path d="M1.4 4.6 V3.2 A1.7 1.7 0 0 1 4.8 3.2 V4.6" fill="none" stroke="#6d8fd8" stroke-width="1.1"/><circle cx="9.6" cy="5.3" r="3.7" fill="#7870da"/><circle cx="9.6" cy="5.3" r="4.3" fill="none" stroke="#7870da" stroke-width="1.4" stroke-dasharray="1.6 1.2"/><circle cx="9.6" cy="5.3" r="1.2" fill="#c0bcf2"/></svg>
<div class="t" style="left:282.4px;top:491.4px;color:#555"><i>入</i><i>库</i></div>
<svg class="sl" style="top:492.6px" width="11" height="10"><g stroke="#79b4f8" stroke-width="0.9"><path d="M0 1.6H9.5M0 5H9.5M0 8.2H9.5"/></g><g fill="#3d92f5"><circle cx="2.6" cy="1.6" r="1.35"/><circle cx="6.5" cy="5" r="1.35"/><circle cx="4.2" cy="8.2" r="1.35"/></g></svg>
<div class="a" style="left:240px;top:129px;width:48px;height:379px;background:linear-gradient(180deg,#f6f6f6 0%,#eeeeee 15%,#e6e7e9 25%,#d6dde7 32%,#e7e8ea 40%,#efefef 55%,#f2f2f2 100%);filter:blur(1.2px)"></div>
<div class="a" style="left:449px;top:56px;width:1px;height:707px;background:#c2c2c6"></div>
<div class="a" style="left:450px;top:56px;width:760px;height:707px;background:#fff"></div>
<div class="t" style="left:460px;top:71px;color:#444"><i>基</i><i>本</i><i>信</i><i>息</i></div>
<div class="t" style="left:542px;top:71px;color:#444"><i>工</i><i>装</i><i>及</i><i>辅</i><i>料</i><svg width="11" height="11" style="vertical-align:-1px;margin-left:1px"><path d="M3.2 8.6 L8.2 3.4 A1.5 1.5 0 0 0 6.1 1.3 L1.6 6 A2.6 2.6 0 0 0 5.3 9.6 L9.6 5.1" fill="none" stroke="#8a8a8a" stroke-width="1.1"/></svg></div>
<div class="t" style="left:649px;top:71px;color:#1890ff"><i>工</i><i>艺</i><i>附</i><i>图</i></div>
<div class="t" style="left:730px;top:71px;color:#444"><i>质</i><i>检</i><i>信</i><i>息</i></div>
<div class="t" style="left:813px;top:71px;color:#444"><i>查</i><i>看</i><i>工</i><i>序</i><i>卡</i><svg width="11" height="11" style="vertical-align:-1px;margin-left:1px"><path d="M3.2 8.6 L8.2 3.4 A1.5 1.5 0 0 0 6.1 1.3 L1.6 6 A2.6 2.6 0 0 0 5.3 9.6 L9.6 5.1" fill="none" stroke="#8a8a8a" stroke-width="1.1"/></svg></div>
<div class="t" style="left:919px;top:71px;color:#444"><i>工</i><i>步</i><svg width="11" height="11" style="vertical-align:-1px;margin-left:1px"><path d="M3.2 8.6 L8.2 3.4 A1.5 1.5 0 0 0 6.1 1.3 L1.6 6 A2.6 2.6 0 0 0 5.3 9.6 L9.6 5.1" fill="none" stroke="#8a8a8a" stroke-width="1.1"/></svg></div>
<div class="t" style="left:988px;top:71px;color:#444"><i>尺</i><i>寸</i><i>检</i><i>验</i><svg width="11" height="11" style="vertical-align:-1px;margin-left:1px"><path d="M3.2 8.6 L8.2 3.4 A1.5 1.5 0 0 0 6.1 1.3 L1.6 6 A2.6 2.6 0 0 0 5.3 9.6 L9.6 5.1" fill="none" stroke="#8a8a8a" stroke-width="1.1"/></svg></div>
<div class="t" style="left:1083px;top:71px;color:#444"><i>数</i><i>控</i><i>程</i><i>序</i><svg width="11" height="11" style="vertical-align:-1px;margin-left:1px"><path d="M3.2 8.6 L8.2 3.4 A1.5 1.5 0 0 0 6.1 1.3 L1.6 6 A2.6 2.6 0 0 0 5.3 9.6 L9.6 5.1" fill="none" stroke="#8a8a8a" stroke-width="1.1"/></svg></div>
<div class="t" style="left:1177px;top:71px;color:#444"><i>焊</i><i>缝</i></div>
<div class="a" style="left:460px;top:89px;width:740px;height:1px;background:#e4e6ee"></div>
<div class="a" style="left:649px;top:88px;width:47px;height:2px;background:#1890ff"></div>
<div class="a" style="left:460px;top:121px;width:740px;height:1px;background:#eef0f5"></div>
<div class="a" style="left:460px;top:129px;width:740px;height:30px;background:#d9dadf"></div>
<div class="a" style="left:507px;top:130px;width:1px;height:29px;background:#e6e7ea"></div>
<div class="a" style="left:554px;top:130px;width:1px;height:29px;background:#e6e7ea"></div>
<div class="a" style="left:882px;top:130px;width:1px;height:29px;background:#e6e7ea"></div>
<div class="a" style="left:990px;top:130px;width:1px;height:29px;background:#e6e7ea"></div>
<div class="a" style="left:479px;top:143px;width:10px;height:10px;background:#fff"></div>
<div class="a" style="left:460px;top:159px;width:1px;height:101px;background:#e8e9ee"></div>
<div class="a" style="left:507px;top:160px;width:1px;height:30px;background:#eceef2"></div>
<div class="a" style="left:478px;top:172px;width:12px;height:12px;border:1px solid #d8d9de;border-radius:2px;background:#fff"></div>
<div class="t" style="left:516px;top:139px;font-weight:bold;color:#333"><i>序</i><i>号</i></div>
<div class="t" style="left:563px;top:139px;font-weight:bold;color:#333"><i>名</i><i>称</i></div>
<div class="t" style="left:891px;top:139px;font-weight:bold;color:#333"><i>创</i><i>建</i><i>者</i></div>
<div class="t" style="left:999px;top:139px;font-weight:bold;color:#333"><i>创</i><i>建</i><i>日</i><i>期</i></div>
<div class="t" style="left:516px;top:169px;color:#444;font-size:10.3px">1</div>
<div class="t" style="left:563px;top:169px;color:#444;font-size:10.3px">l</div>
<svg class="a" style="left:566.0px;top:158.0px;filter:blur(0.4px)" width="115.0" height="30.0"><rect x="0.0" y="0.0" width="9.5" height="9.5" fill="rgb(234,234,234)"/><rect x="9.0" y="0.0" width="9.5" height="9.5" fill="rgb(236,236,236)"/><rect x="18.0" y="0.0" width="9.5" height="9.5" fill="rgb(229,229,229)"/><rect x="27.0" y="0.0" width="9.5" height="9.5" fill="rgb(232,232,232)"/><rect x="36.0" y="0.0" width="9.5" height="9.5" fill="rgb(233,233,233)"/><rect x="45.0" y="0.0" width="9.5" height="9.5" fill="rgb(231,231,231)"/><rect x="54.0" y="0.0" width="9.5" height="9.5" fill="rgb(236,236,236)"/><rect x="63.0" y="0.0" width="9.5" height="9.5" fill="rgb(232,232,232)"/><rect x="72.0" y="0.0" width="9.5" height="9.5" fill="rgb(228,228,228)"/><rect x="81.0" y="0.0" width="9.5" height="9.5" fill="rgb(229,229,229)"/><rect x="90.0" y="0.0" width="9.5" height="9.5" fill="rgb(237,237,237)"/><rect x="99.0" y="0.0" width="9.5" height="9.5" fill="rgb(229,229,229)"/><rect x="108.0" y="0.0" width="9.5" height="9.5" fill="rgb(234,234,234)"/><rect x="0.0" y="9.0" width="9.5" height="9.5" fill="rgb(229,229,229)"/><rect x="9.0" y="9.0" width="9.5" height="9.5" fill="rgb(232,232,232)"/><rect x="18.0" y="9.0" width="9.5" height="9.5" fill="rgb(234,234,234)"/><rect x="27.0" y="9.0" width="9.5" height="9.5" fill="rgb(229,229,229)"/><rect x="36.0" y="9.0" width="9.5" height="9.5" fill="rgb(228,228,228)"/><rect x="45.0" y="9.0" width="9.5" height="9.5" fill="rgb(238,238,238)"/><rect x="54.0" y="9.0" width="9.5" height="9.5" fill="rgb(228,228,228)"/><rect x="63.0" y="9.0" width="9.5" height="9.5" fill="rgb(231,231,231)"/><rect x="72.0" y="9.0" width="9.5" height="9.5" fill="rgb(231,231,231)"/><rect x="81.0" y="9.0" width="9.5" height="9.5" fill="rgb(228,228,228)"/><rect x="90.0" y="9.0" width="9.5" height="9.5" fill="rgb(235,235,235)"/><rect x="99.0" y="9.0" width="9.5" height="9.5" fill="rgb(234,234,234)"/><rect x="108.0" y="9.0" width="9.5" height="9.5" fill="rgb(234,234,234)"/><rect x="0.0" y="18.0" width="9.5" height="9.5" fill="rgb(234,234,234)"/><rect x="9.0" y="18.0" width="9.5" height="9.5" fill="rgb(229,229,229)"/><rect x="18.0" y="18.0" width="9.5" height="9.5" fill="rgb(237,237,237)"/><rect x="27.0" y="18.0" width="9.5" height="9.5" fill="rgb(238,238,238)"/><rect x="36.0" y="18.0" width="9.5" height="9.5" fill="rgb(231,231,231)"/><rect x="45.0" y="18.0" width="9.5" height="9.5" fill="rgb(238,238,238)"/><rect x="54.0" y="18.0" width="9.5" height="9.5" fill="rgb(232,232,232)"/><rect x="63.0" y="18.0" width="9.5" height="9.5" fill="rgb(233,233,233)"/><rect x="72.0" y="18.0" width="9.5" height="9.5" fill="rgb(229,229,229)"/><rect x="81.0" y="18.0" width="9.5" height="9.5" fill="rgb(232,232,232)"/><rect x="90.0" y="18.0" width="9.5" height="9.5" fill="rgb(233,233,233)"/><rect x="99.0" y="18.0" width="9.5" height="9.5" fill="rgb(228,228,228)"/><rect x="108.0" y="18.0" width="9.5" height="9.5" fill="rgb(234,234,234)"/><rect x="0.0" y="27.0" width="9.5" height="9.5" fill="rgb(229,229,229)"/><rect x="9.0" y="27.0" width="9.5" height="9.5" fill="rgb(230,230,230)"/><rect x="18.0" y="27.0" width="9.5" height="9.5" fill="rgb(231,231,231)"/><rect x="27.0" y="27.0" width="9.5" height="9.5" fill="rgb(229,229,229)"/><rect x="36.0" y="27.0" width="9.5" height="9.5" fill="rgb(228,228,228)"/><rect x="45.0" y="27.0" width="9.5" height="9.5" fill="rgb(228,228,228)"/><rect x="54.0" y="27.0" width="9.5" height="9.5" fill="rgb(235,235,235)"/><rect x="63.0" y="27.0" width="9.5" height="9.5" fill="rgb(235,235,235)"/><rect x="72.0" y="27.0" width="9.5" height="9.5" fill="rgb(230,230,230)"/><rect x="81.0" y="27.0" width="9.5" height="9.5" fill="rgb(238,238,238)"/><rect x="90.0" y="27.0" width="9.5" height="9.5" fill="rgb(236,236,236)"/><rect x="99.0" y="27.0" width="9.5" height="9.5" fill="rgb(231,231,231)"/><rect x="108.0" y="27.0" width="9.5" height="9.5" fill="rgb(235,235,235)"/></svg>
<div class="t" style="left:681px;top:169px;color:#444;font-size:10.3px">_<i>精</i><i>铣</i><i>叶</i><i>片</i><i>各</i><i>部</i>.prt</div>
<div class="a" style="left:891px;top:162px;width:2px;height:26px;background:#f0f0f0"></div>
<svg class="a" style="left:893.0px;top:160.0px;filter:blur(0.4px)" width="53.0" height="30.0"><rect x="0.0" y="0.0" width="9.5" height="9.5" fill="rgb(235,235,235)"/><rect x="9.0" y="0.0" width="9.5" height="9.5" fill="rgb(230,230,230)"/><rect x="18.0" y="0.0" width="9.5" height="9.5" fill="rgb(229,229,229)"/><rect x="27.0" y="0.0" width="9.5" height="9.5" fill="rgb(233,233,233)"/><rect x="36.0" y="0.0" width="9.5" height="9.5" fill="rgb(237,237,237)"/><rect x="45.0" y="0.0" width="9.5" height="9.5" fill="rgb(233,233,233)"/><rect x="0.0" y="9.0" width="9.5" height="9.5" fill="rgb(228,228,228)"/><rect x="9.0" y="9.0" width="9.5" height="9.5" fill="rgb(233,233,233)"/><rect x="18.0" y="9.0" width="9.5" height="9.5" fill="rgb(233,233,233)"/><rect x="27.0" y="9.0" width="9.5" height="9.5" fill="rgb(230,230,230)"/><rect x="36.0" y="9.0" width="9.5" height="9.5" fill="rgb(227,227,227)"/><rect x="45.0" y="9.0" width="9.5" height="9.5" fill="rgb(231,231,231)"/><rect x="0.0" y="18.0" width="9.5" height="9.5" fill="rgb(236,236,236)"/><rect x="9.0" y="18.0" width="9.5" height="9.5" fill="rgb(231,231,231)"/><rect x="18.0" y="18.0" width="9.5" height="9.5" fill="rgb(227,227,227)"/><rect x="27.0" y="18.0" width="9.5" height="9.5" fill="rgb(230,230,230)"/><rect x="36.0" y="18.0" width="9.5" height="9.5" fill="rgb(229,229,229)"/><rect x="45.0" y="18.0" width="9.5" height="9.5" fill="rgb(233,233,233)"/><rect x="0.0" y="27.0" width="9.5" height="9.5" fill="rgb(236,236,236)"/><rect x="9.0" y="27.0" width="9.5" height="9.5" fill="rgb(237,237,237)"/><rect x="18.0" y="27.0" width="9.5" height="9.5" fill="rgb(236,236,236)"/><rect x="27.0" y="27.0" width="9.5" height="9.5" fill="rgb(228,228,228)"/><rect x="36.0" y="27.0" width="9.5" height="9.5" fill="rgb(227,227,227)"/><rect x="45.0" y="27.0" width="9.5" height="9.5" fill="rgb(229,229,229)"/></svg>
<div class="t" style="left:999px;top:169px;color:#444;font-size:10.3px">2022-12-25 15:01:42</div>
<div class="a" style="left:450px;top:260px;width:760px;height:7.5px;background:linear-gradient(180deg,#f5f5f7 0,#f5f5f7 2px,#fbfbfc 2px,#fbfbfc 4px,#f0f0f3 4px)"></div>
<div class="a" style="left:453px;top:267.5px;width:106px;height:487px;background:#fff;box-shadow:0 0 2px rgba(0,0,0,.06)"></div>
<div class="a" style="left:468px;top:281px;width:88px;height:17px;background:#f4f4f6;border-radius:3px"></div>
<div class="a" style="left:480px;top:285px;font-size:6px;line-height:8px;color:#5b9bf5;white-space:nowrap">D170C-103000A001_0...</div>
<div class="a" style="left:480px;top:303px;font-size:6px;line-height:8px;color:#333;white-space:nowrap">D170C-103000A001_0...</div>
<div class="a" style="left:559px;top:267.5px;width:4px;height:484px;background:#ebebf0"></div>
<div class="a" style="left:563px;top:268px;width:640px;height:483px;background:#ededed"></div>
<div class="a" style="left:559px;top:751px;width:660px;height:6px;background:#f0f0f4"></div>
<div class="a" style="left:453px;top:754.5px;width:106px;height:2.5px;background:#f0f0f4"></div>
<svg class="a" style="left:559px;top:267px" width="8" height="8"><path d="M3.5 1.5 L1.2 4 L3.5 6.5 M6 1.5 L3.7 4 L6 6.5" fill="none" stroke="#9a9aa0" stroke-width="1"/></svg>
<div class="a" style="left:563px;top:497px;width:11px;height:21px;border-radius:0 11px 11px 0;background:#fff;box-shadow:1px 0 3px rgba(0,0,0,.07)"></div>
<div class="a" style="left:566px;top:506px;width:0;height:0;border-top:1.8px solid transparent;border-bottom:1.8px solid transparent;border-left:3px solid #6a6a80"></div>
<svg class="a" style="left:563px;top:268px" width="637" height="483" viewBox="563 268 637 483"><defs><filter id="bl" x="-20%" y="-20%" width="140%" height="140%"><feGaussianBlur stdDeviation="0.6"/></filter><linearGradient id="af" x1="0" y1="0" x2="0" y2="1"><stop offset="0" stop-color="#c88420"/><stop offset="0.12" stop-color="#b2700e"/><stop offset="0.45" stop-color="#9c5c08"/><stop offset="0.75" stop-color="#a86808"/><stop offset="1" stop-color="#c07a12"/></linearGradient></defs><path d="M746.0 385.5 L784.5 386.3 L771.5 453.4 L733.0 452.5Z" fill="#f69c08" stroke="#2a1a00" stroke-width="0.60" stroke-linejoin="round" /><path d="M784.5 386.3 L806.2 434.0 L801.8 435.0 L779.7 454.7 L771.5 453.4Z" fill="#b97305" stroke="#2a1a00" stroke-width="0.60" stroke-linejoin="round" /><path d="M733.0 452.5 L771.5 453.4 L822.5 565.0 L783.3 564.2Z" fill="#694100" stroke="#2a1a00" stroke-width="0.60" stroke-linejoin="round" /><path d="M771.5 453.4 L779.7 454.7 L808.3 519.2 L831.7 520.0 L822.5 565.0Z" fill="#c07a06" stroke="#2a1a00" stroke-width="0.60" stroke-linejoin="round" /><path d="M779.7 454.7 L876.5 457.1 L882.0 459.9 L887.5 468.8 L889.6 470.9 L921.5 471.6 L919.8 460.0 L922.8 458.5 L1010.1 460.6 L1037.0 526.0 L947.5 521.8 L939.8 510.0 L917.0 509.4 L904.0 521.0 L808.3 519.2Z" fill="#694100" stroke="#2a1a00" stroke-width="0.60" stroke-linejoin="round" /><path d="M968.8 459.9 L988.8 506.0 L1027.3 506.7" fill="none" stroke="#2a1a00" stroke-width="0.60"/><path d="M860.0 506.0 L901.3 508.0" fill="none" stroke="#2a1a00" stroke-width="0.60"/><path d="M902.0 509.4 L917.1 509.4 L904.7 518.3Z" fill="#b97305" stroke="#2a1a00" stroke-width="0.40" stroke-linejoin="round" /><path d="M801.8 435.0 L895.1 437.9 L876.5 457.1 L779.7 454.7Z" fill="#f69c08" stroke="#2a1a00" stroke-width="0.60" stroke-linejoin="round" /><path d="M895.1 437.9 L899.9 440.6 L882.0 459.9 L876.5 457.1Z" fill="#ee9808" stroke="#2a1a00" stroke-width="0.60" stroke-linejoin="round" /><path d="M899.9 440.6 L904.7 449.6 L887.5 468.8 L882.0 459.9Z" fill="#b77405" stroke="#2a1a00" stroke-width="0.60" stroke-linejoin="round" /><path d="M904.7 449.6 L907.5 451.6 L889.6 470.9 L887.5 468.8Z" fill="#f69c08" stroke="#2a1a00" stroke-width="0.30" stroke-linejoin="round" /><path d="M907.5 451.6 L924.6 452.7 L922.8 458.5 L919.8 460.0 L921.5 471.6 L889.6 470.9Z" fill="#f69c08" stroke="#2a1a00" stroke-width="0.60" stroke-linejoin="round" /><path d="M940.6 439.3 L1027.3 443.4 L1010.1 460.6 L922.8 458.5 L924.6 452.7Z" fill="#f69c08" stroke="#2a1a00" stroke-width="0.60" stroke-linejoin="round" /><path d="M988.1 441.3 L968.8 459.9" fill="none" stroke="#2a1a00" stroke-width="0.60"/><path d="M1027.3 443.4 L1037.6 464.0 L1047.8 518.0 L1034.0 525.5 L1010.1 460.6Z" fill="#b97305" stroke="#2a1a00" stroke-width="0.60" stroke-linejoin="round" /><path d="M1016.0 464.6 L1053.0 467.3 L1090.0 470.0 L1130.0 472.5 L1150.0 475.0 L1158.0 512.0 L1095.0 512.8 L1060.0 515.0 L1034.0 517.0 L1031.0 500.0 L1027.0 480.0Z" fill="url(#af)" stroke="#2a1a00" stroke-width="0.50" stroke-linejoin="round" /><path d="M1016.0 464.6 L1053.0 467.3 L1064.4 491.8 L1032.0 490.9 L1025.0 475.0Z" fill="#8d5406" stroke="#2a1a00" stroke-width="0.50" stroke-linejoin="round" /><path d="M1031.0 492.0 L1034.0 517.0" fill="none" stroke="#5a3300" stroke-width="0.50"/><path d="M1127.4 461.1 L1142.3 445.4 L1205.0 446.3 L1205.0 462.0Z" fill="#f69c08" stroke="#2a1a00" stroke-width="0.60" stroke-linejoin="round" /><path d="M1160.6 445.4 L1144.0 461.1" fill="none" stroke="#2a1a00" stroke-width="0.60"/><path d="M1127.4 461.1 L1205.0 462.0 L1205.0 536.4 L1158.0 533.8Z" fill="#694100" stroke="#2a1a00" stroke-width="0.60" stroke-linejoin="round" /><path d="M1144.0 461.1 L1166.8 511.0 L1205.0 512.0" fill="none" stroke="#2a1a00" stroke-width="0.60"/><path d="M728.0 432.2 L806.0 434.0" fill="none" stroke="#444" stroke-width="0.90"/><path d="M895.0 437.5 L960.0 439.3" fill="none" stroke="#444" stroke-width="0.90"/><path d="M732.5 521.2 L944.0 527.0" fill="none" stroke="#444" stroke-width="0.90"/><path d="M736.2 432.7 L740.0 522.0" fill="none" stroke="#444" stroke-width="0.80"/><path d="M736.5 434.0 L738.5 441.0 L734.5 441.0 Z" fill="#222"/><path d="M739.7 520.0 L737.7 513.0 L741.7 513.0 Z" fill="#222"/><path d="M857.2 370.7 L860.4 438.0" fill="none" stroke="#444" stroke-width="0.80"/><path d="M860.3 436.0 L858.0 429.1 L861.9 428.9 Z" fill="#222"/><path d="M859.8 438.0 L862.0 469.0" fill="none" stroke="#111" stroke-width="0.80"/><path d="M861.0 441.0 L863.0 448.0 L859.0 448.0 Z" fill="#222"/><path d="M864.2 475.5 L868.5 560.0" fill="none" stroke="#111" stroke-width="0.80"/><path d="M865.5 505.0 L863.5 498.0 L867.5 498.0 Z" fill="#222"/><path d="M867.3 522.0 L869.3 529.0 L865.3 529.0 Z" fill="#222"/><path d="M858.8 506.3 L903.2 507.0" fill="none" stroke="#111" stroke-width="0.70"/><path d="M895.2 348.5 L898.4 438.0" fill="none" stroke="#444" stroke-width="0.80"/><path d="M895.2 354.8 L1163.3 363.7" fill="none" stroke="#444" stroke-width="0.80"/><path d="M896.0 354.8 L903.0 352.8 L903.0 356.8 Z" fill="#222"/><path d="M986.0 358.5 L979.0 360.5 L979.0 356.5 Z" fill="#222"/><path d="M1163.0 363.6 L1156.0 365.6 L1156.0 361.6 Z" fill="#222"/><path d="M921.3 353.5 L960.0 354.5" fill="none" stroke="#666" stroke-width="1.20"/><path d="M1010.0 356.0 L1049.0 357.5" fill="none" stroke="#666" stroke-width="1.20"/><path d="M940.3 366.0 L943.5 438.0" fill="none" stroke="#444" stroke-width="0.80"/><path d="M943.3 436.0 L941.3 429.0 L945.3 429.0 Z" fill="#222"/><path d="M942.5 438.0 L946.0 489.0" fill="none" stroke="#111" stroke-width="0.80"/><path d="M945.0 469.0 L947.0 476.0 L943.0 476.0 Z" fill="#222"/><path d="M986.2 351.7 L988.6 402.3" fill="none" stroke="#444" stroke-width="0.80"/><path d="M1162.5 356.7 L1165.0 402.5" fill="none" stroke="#444" stroke-width="0.80"/><path d="M1105.0 386.7 L1107.5 440.0" fill="none" stroke="#444" stroke-width="0.80"/><path d="M1107.2 438.0 L1105.2 431.0 L1109.2 431.0 Z" fill="#222"/><path d="M1107.5 440.0 L1108.5 473.0" fill="none" stroke="#444" stroke-width="0.80"/><path d="M1108.0 443.0 L1110.0 450.0 L1106.0 450.0 Z" fill="#222"/><path d="M1100.0 437.5 L1146.7 439.2" fill="none" stroke="#444" stroke-width="0.80"/><path d="M1034.0 441.0 L1115.0 443.6" fill="none" stroke="#444" stroke-width="0.80"/><path d="M867.0 520.0 L869.0 585.0" fill="none" stroke="#444" stroke-width="0.80"/><path d="M867.3 523.0 L869.3 530.0 L865.3 530.0 Z" fill="#222"/><path d="M831.0 581.0 L832.0 614.0" fill="none" stroke="#444" stroke-width="0.80"/><path d="M842.0 607.4 L906.0 610.0" fill="none" stroke="#444" stroke-width="0.80"/><path d="M906.0 610.0 L899.0 612.0 L899.0 608.0 Z" fill="#222"/><path d="M902.9 524.5 L908.0 656.3" fill="none" stroke="#444" stroke-width="0.80"/><path d="M941.7 525.8 L946.8 648.5" fill="none" stroke="#444" stroke-width="0.80"/><path d="M908.0 640.8 L1020.0 643.0" fill="none" stroke="#444" stroke-width="0.80"/><path d="M908.5 640.8 L915.5 638.8 L915.5 642.8 Z" fill="#222"/><path d="M946.0 641.6 L939.0 643.6 L939.0 639.6 Z" fill="#222"/><path d="M908.0 649.3 L1205.0 657.6" fill="none" stroke="#444" stroke-width="0.80"/><path d="M908.5 649.3 L915.5 647.3 L915.5 651.3 Z" fill="#222"/><path d="M690.0 555.6 L743.0 556.4 L804.0 523.0" fill="none" stroke="#4040f0" stroke-width="0.90"/><path d="M804.0 523.0 L799.6 527.5 L797.9 524.3 Z" fill="#4040f0"/><path d="M898.5 497.7 L938.4 498.4 L937.7 460.0" fill="none" stroke="#4040f0" stroke-width="1.00"/><path d="M937.7 458.0 L939.7 465.0 L935.7 465.0 Z" fill="#4040f0"/><path d="M944.2 527.0 L1050.2 613.7 L1101.8 616.2" fill="none" stroke="#4040f0" stroke-width="0.90"/><path d="M1033.4 522.0 L1068.2 559.0 L1125.0 560.7" fill="none" stroke="#4040f0" stroke-width="0.90"/><path d="M1040.0 529.0 L1035.3 526.6 L1037.6 524.3 Z" fill="#4040f0"/><path d="M1068.2 559.0 L1149.6 515.5" fill="none" stroke="#4040f0" stroke-width="0.90"/><path d="M1149.6 515.5 L1145.2 519.9 L1143.5 516.8 Z" fill="#4040f0"/><g filter="url(#bl)"><clipPath id="cp78"><rect x="838.2" y="369.0" width="16.6" height="41.2" rx="3.0"/></clipPath><g clip-path="url(#cp78)"><rect x="838.2" y="369.0" width="12.3" height="9.3" fill="rgb(201,201,201)"/><rect x="850.2" y="369.0" width="12.3" height="9.3" fill="rgb(195,195,195)"/><rect x="838.2" y="378.0" width="12.3" height="9.3" fill="rgb(203,203,203)"/><rect x="850.2" y="378.0" width="12.3" height="9.3" fill="rgb(211,211,211)"/><rect x="838.2" y="387.0" width="12.3" height="9.3" fill="rgb(192,192,192)"/><rect x="850.2" y="387.0" width="12.3" height="9.3" fill="rgb(193,193,193)"/><rect x="838.2" y="396.0" width="12.3" height="9.3" fill="rgb(217,217,217)"/><rect x="850.2" y="396.0" width="12.3" height="9.3" fill="rgb(208,208,208)"/><rect x="838.2" y="405.0" width="12.3" height="9.3" fill="rgb(194,194,194)"/><rect x="850.2" y="405.0" width="12.3" height="9.3" fill="rgb(202,202,202)"/></g></g><g filter="url(#bl)"><clipPath id="cp90"><rect x="922.0" y="333.5" width="35.0" height="19.0" rx="5.0"/></clipPath><g clip-path="url(#cp90)"><rect x="922.0" y="333.5" width="12.3" height="9.3" fill="rgb(214,214,214)"/><rect x="934.0" y="333.5" width="12.3" height="9.3" fill="rgb(197,197,197)"/><rect x="946.0" y="333.5" width="12.3" height="9.3" fill="rgb(212,212,212)"/><rect x="922.0" y="342.5" width="12.3" height="9.3" fill="rgb(202,202,202)"/><rect x="934.0" y="342.5" width="12.3" height="9.3" fill="rgb(197,197,197)"/><rect x="946.0" y="342.5" width="12.3" height="9.3" fill="rgb(198,198,198)"/><rect x="922.0" y="351.5" width="12.3" height="9.3" fill="rgb(209,209,209)"/><rect x="934.0" y="351.5" width="12.3" height="9.3" fill="rgb(209,209,209)"/><rect x="946.0" y="351.5" width="12.3" height="9.3" fill="rgb(198,198,198)"/></g></g><g filter="url(#bl)"><clipPath id="cp101"><rect x="910.2" y="358.0" width="25.4" height="46.7" rx="5.0"/></clipPath><g clip-path="url(#cp101)"><rect x="910.2" y="358.0" width="12.3" height="9.3" fill="rgb(201,201,201)"/><rect x="922.2" y="358.0" width="12.3" height="9.3" fill="rgb(196,196,196)"/><rect x="934.2" y="358.0" width="12.3" height="9.3" fill="rgb(211,211,211)"/><rect x="910.2" y="367.0" width="12.3" height="9.3" fill="rgb(207,207,207)"/><rect x="922.2" y="367.0" width="12.3" height="9.3" fill="rgb(195,195,195)"/><rect x="934.2" y="367.0" width="12.3" height="9.3" fill="rgb(220,220,220)"/><rect x="910.2" y="376.0" width="12.3" height="9.3" fill="rgb(212,212,212)"/><rect x="922.2" y="376.0" width="12.3" height="9.3" fill="rgb(197,197,197)"/><rect x="934.2" y="376.0" width="12.3" height="9.3" fill="rgb(201,201,201)"/><rect x="910.2" y="385.0" width="12.3" height="9.3" fill="rgb(214,214,214)"/><rect x="922.2" y="385.0" width="12.3" height="9.3" fill="rgb(214,214,214)"/><rect x="934.2" y="385.0" width="12.3" height="9.3" fill="rgb(212,212,212)"/><rect x="910.2" y="394.0" width="12.3" height="9.3" fill="rgb(195,195,195)"/><rect x="922.2" y="394.0" width="12.3" height="9.3" fill="rgb(212,212,212)"/><rect x="934.2" y="394.0" width="12.3" height="9.3" fill="rgb(212,212,212)"/><rect x="910.2" y="403.0" width="12.3" height="9.3" fill="rgb(206,206,206)"/><rect x="922.2" y="403.0" width="12.3" height="9.3" fill="rgb(195,195,195)"/><rect x="934.2" y="403.0" width="12.3" height="9.3" fill="rgb(201,201,201)"/></g></g><g filter="url(#bl)"><clipPath id="cp121"><rect x="1010.8" y="332.5" width="32.5" height="20.0" rx="5.0"/></clipPath><g clip-path="url(#cp121)"><rect x="1010.8" y="332.5" width="12.3" height="9.3" fill="rgb(195,195,195)"/><rect x="1022.8" y="332.5" width="12.3" height="9.3" fill="rgb(211,211,211)"/><rect x="1034.8" y="332.5" width="12.3" height="9.3" fill="rgb(198,198,198)"/><rect x="1010.8" y="341.5" width="12.3" height="9.3" fill="rgb(203,203,203)"/><rect x="1022.8" y="341.5" width="12.3" height="9.3" fill="rgb(207,207,207)"/><rect x="1034.8" y="341.5" width="12.3" height="9.3" fill="rgb(198,198,198)"/><rect x="1010.8" y="350.5" width="12.3" height="9.3" fill="rgb(211,211,211)"/><rect x="1022.8" y="350.5" width="12.3" height="9.3" fill="rgb(197,197,197)"/><rect x="1034.8" y="350.5" width="12.3" height="9.3" fill="rgb(212,212,212)"/></g></g><g filter="url(#bl)"><clipPath id="cp132"><rect x="1090.8" y="386.7" width="13.4" height="39.1" rx="2.0"/></clipPath><g clip-path="url(#cp132)"><rect x="1090.8" y="386.7" width="12.3" height="9.3" fill="rgb(195,195,195)"/><rect x="1102.8" y="386.7" width="12.3" height="9.3" fill="rgb(203,203,203)"/><rect x="1090.8" y="395.7" width="12.3" height="9.3" fill="rgb(212,212,212)"/><rect x="1102.8" y="395.7" width="12.3" height="9.3" fill="rgb(207,207,207)"/><rect x="1090.8" y="404.7" width="12.3" height="9.3" fill="rgb(191,191,191)"/><rect x="1102.8" y="404.7" width="12.3" height="9.3" fill="rgb(189,189,189)"/><rect x="1090.8" y="413.7" width="12.3" height="9.3" fill="rgb(204,204,204)"/><rect x="1102.8" y="413.7" width="12.3" height="9.3" fill="rgb(204,204,204)"/><rect x="1090.8" y="422.7" width="12.3" height="9.3" fill="rgb(206,206,206)"/><rect x="1102.8" y="422.7" width="12.3" height="9.3" fill="rgb(192,192,192)"/></g></g><g filter="url(#bl)"><clipPath id="cp144"><rect x="1175.0" y="406.7" width="13.0" height="20.0" rx="4.0"/></clipPath><g clip-path="url(#cp144)"><rect x="1175.0" y="406.7" width="12.3" height="9.3" fill="rgb(189,189,189)"/><rect x="1187.0" y="406.7" width="12.3" height="9.3" fill="rgb(181,181,181)"/><rect x="1175.0" y="415.7" width="12.3" height="9.3" fill="rgb(195,195,195)"/><rect x="1187.0" y="415.7" width="12.3" height="9.3" fill="rgb(200,200,200)"/><rect x="1175.0" y="424.7" width="12.3" height="9.3" fill="rgb(180,180,180)"/><rect x="1187.0" y="424.7" width="12.3" height="9.3" fill="rgb(196,196,196)"/></g></g><g filter="url(#bl)"><clipPath id="cp152"><rect x="707.0" y="453.0" width="30.0" height="48.0" rx="5.0"/></clipPath><g clip-path="url(#cp152)"><rect x="707.0" y="453.0" width="12.3" height="9.3" fill="rgb(187,187,187)"/><rect x="719.0" y="453.0" width="12.3" height="9.3" fill="rgb(205,205,205)"/><rect x="731.0" y="453.0" width="12.3" height="9.3" fill="rgb(192,192,192)"/><rect x="707.0" y="462.0" width="12.3" height="9.3" fill="rgb(201,201,201)"/><rect x="719.0" y="462.0" width="12.3" height="9.3" fill="rgb(207,207,207)"/><rect x="731.0" y="462.0" width="12.3" height="9.3" fill="rgb(203,203,203)"/><rect x="707.0" y="471.0" width="12.3" height="9.3" fill="rgb(199,199,199)"/><rect x="719.0" y="471.0" width="12.3" height="9.3" fill="rgb(210,210,210)"/><rect x="731.0" y="471.0" width="12.3" height="9.3" fill="rgb(196,196,196)"/><rect x="707.0" y="480.0" width="12.3" height="9.3" fill="rgb(200,200,200)"/><rect x="719.0" y="480.0" width="12.3" height="9.3" fill="rgb(204,204,204)"/><rect x="731.0" y="480.0" width="12.3" height="9.3" fill="rgb(200,200,200)"/><rect x="707.0" y="489.0" width="12.3" height="9.3" fill="rgb(197,197,197)"/><rect x="719.0" y="489.0" width="12.3" height="9.3" fill="rgb(195,195,195)"/><rect x="731.0" y="489.0" width="12.3" height="9.3" fill="rgb(193,193,193)"/><rect x="707.0" y="498.0" width="12.3" height="9.3" fill="rgb(211,211,211)"/><rect x="719.0" y="498.0" width="12.3" height="9.3" fill="rgb(191,191,191)"/><rect x="731.0" y="498.0" width="12.3" height="9.3" fill="rgb(208,208,208)"/></g></g><g filter="url(#bl)"><clipPath id="cp172"><rect x="685.0" y="538.0" width="57.0" height="22.0" rx="8.0"/></clipPath><g clip-path="url(#cp172)"><rect x="685.0" y="538.0" width="12.3" height="9.3" fill="rgb(212,212,220)"/><rect x="697.0" y="538.0" width="12.3" height="9.3" fill="rgb(195,195,203)"/><rect x="709.0" y="538.0" width="12.3" height="9.3" fill="rgb(190,190,198)"/><rect x="721.0" y="538.0" width="12.3" height="9.3" fill="rgb(206,206,214)"/><rect x="733.0" y="538.0" width="12.3" height="9.3" fill="rgb(197,197,205)"/><rect x="685.0" y="547.0" width="12.3" height="9.3" fill="rgb(204,204,212)"/><rect x="697.0" y="547.0" width="12.3" height="9.3" fill="rgb(203,203,211)"/><rect x="709.0" y="547.0" width="12.3" height="9.3" fill="rgb(198,198,206)"/><rect x="721.0" y="547.0" width="12.3" height="9.3" fill="rgb(211,211,219)"/><rect x="733.0" y="547.0" width="12.3" height="9.3" fill="rgb(202,202,210)"/><rect x="685.0" y="556.0" width="12.3" height="9.3" fill="rgb(197,197,205)"/><rect x="697.0" y="556.0" width="12.3" height="9.3" fill="rgb(207,207,215)"/><rect x="709.0" y="556.0" width="12.3" height="9.3" fill="rgb(190,190,198)"/><rect x="721.0" y="556.0" width="12.3" height="9.3" fill="rgb(191,191,199)"/><rect x="733.0" y="556.0" width="12.3" height="9.3" fill="rgb(204,204,212)"/></g></g><g filter="url(#bl)"><clipPath id="cp189"><rect x="838.0" y="550.0" width="31.0" height="36.0" rx="12.0"/></clipPath><g clip-path="url(#cp189)"><rect x="838.0" y="550.0" width="12.3" height="9.3" fill="rgb(206,206,206)"/><rect x="850.0" y="550.0" width="12.3" height="9.3" fill="rgb(198,198,198)"/><rect x="862.0" y="550.0" width="12.3" height="9.3" fill="rgb(217,217,217)"/><rect x="838.0" y="559.0" width="12.3" height="9.3" fill="rgb(203,203,203)"/><rect x="850.0" y="559.0" width="12.3" height="9.3" fill="rgb(197,197,197)"/><rect x="862.0" y="559.0" width="12.3" height="9.3" fill="rgb(208,208,208)"/><rect x="838.0" y="568.0" width="12.3" height="9.3" fill="rgb(206,206,206)"/><rect x="850.0" y="568.0" width="12.3" height="9.3" fill="rgb(194,194,194)"/><rect x="862.0" y="568.0" width="12.3" height="9.3" fill="rgb(214,214,214)"/><rect x="838.0" y="577.0" width="12.3" height="9.3" fill="rgb(195,195,195)"/><rect x="850.0" y="577.0" width="12.3" height="9.3" fill="rgb(217,217,217)"/><rect x="862.0" y="577.0" width="12.3" height="9.3" fill="rgb(210,210,210)"/></g></g><g filter="url(#bl)"><clipPath id="cp203"><rect x="741.0" y="589.0" width="101.0" height="21.0" rx="6.0"/></clipPath><g clip-path="url(#cp203)"><rect x="741.0" y="589.0" width="12.3" height="9.3" fill="rgb(205,205,205)"/><rect x="753.0" y="589.0" width="12.3" height="9.3" fill="rgb(212,212,212)"/><rect x="765.0" y="589.0" width="12.3" height="9.3" fill="rgb(213,213,213)"/><rect x="777.0" y="589.0" width="12.3" height="9.3" fill="rgb(197,197,197)"/><rect x="789.0" y="589.0" width="12.3" height="9.3" fill="rgb(197,197,197)"/><rect x="801.0" y="589.0" width="12.3" height="9.3" fill="rgb(209,209,209)"/><rect x="813.0" y="589.0" width="12.3" height="9.3" fill="rgb(198,198,198)"/><rect x="825.0" y="589.0" width="12.3" height="9.3" fill="rgb(206,206,206)"/><rect x="837.0" y="589.0" width="12.3" height="9.3" fill="rgb(202,202,202)"/><rect x="741.0" y="598.0" width="12.3" height="9.3" fill="rgb(205,205,205)"/><rect x="753.0" y="598.0" width="12.3" height="9.3" fill="rgb(212,212,212)"/><rect x="765.0" y="598.0" width="12.3" height="9.3" fill="rgb(201,201,201)"/><rect x="777.0" y="598.0" width="12.3" height="9.3" fill="rgb(189,189,189)"/><rect x="789.0" y="598.0" width="12.3" height="9.3" fill="rgb(213,213,213)"/><rect x="801.0" y="598.0" width="12.3" height="9.3" fill="rgb(189,189,189)"/><rect x="813.0" y="598.0" width="12.3" height="9.3" fill="rgb(195,195,195)"/><rect x="825.0" y="598.0" width="12.3" height="9.3" fill="rgb(202,202,202)"/><rect x="837.0" y="598.0" width="12.3" height="9.3" fill="rgb(209,209,209)"/><rect x="741.0" y="607.0" width="12.3" height="9.3" fill="rgb(208,208,208)"/><rect x="753.0" y="607.0" width="12.3" height="9.3" fill="rgb(189,189,189)"/><rect x="765.0" y="607.0" width="12.3" height="9.3" fill="rgb(188,188,188)"/><rect x="777.0" y="607.0" width="12.3" height="9.3" fill="rgb(210,210,210)"/><rect x="789.0" y="607.0" width="12.3" height="9.3" fill="rgb(209,209,209)"/><rect x="801.0" y="607.0" width="12.3" height="9.3" fill="rgb(196,196,196)"/><rect x="813.0" y="607.0" width="12.3" height="9.3" fill="rgb(207,207,207)"/><rect x="825.0" y="607.0" width="12.3" height="9.3" fill="rgb(205,205,205)"/><rect x="837.0" y="607.0" width="12.3" height="9.3" fill="rgb(208,208,208)"/></g></g><g filter="url(#bl)"><clipPath id="cp232"><rect x="1069.5" y="528.4" width="34.9" height="27.1" rx="6.0"/></clipPath><g clip-path="url(#cp232)"><rect x="1069.5" y="528.4" width="12.3" height="9.3" fill="rgb(201,201,212)"/><rect x="1081.5" y="528.4" width="12.3" height="9.3" fill="rgb(189,189,200)"/><rect x="1093.5" y="528.4" width="12.3" height="9.3" fill="rgb(184,184,195)"/><rect x="1069.5" y="537.4" width="12.3" height="9.3" fill="rgb(197,197,208)"/><rect x="1081.5" y="537.4" width="12.3" height="9.3" fill="rgb(187,187,198)"/><rect x="1093.5" y="537.4" width="12.3" height="9.3" fill="rgb(196,196,207)"/><rect x="1069.5" y="546.4" width="12.3" height="9.3" fill="rgb(186,186,197)"/><rect x="1081.5" y="546.4" width="12.3" height="9.3" fill="rgb(175,175,186)"/><rect x="1093.5" y="546.4" width="12.3" height="9.3" fill="rgb(189,189,200)"/><rect x="1069.5" y="555.4" width="12.3" height="9.3" fill="rgb(186,186,197)"/><rect x="1081.5" y="555.4" width="12.3" height="9.3" fill="rgb(180,180,191)"/><rect x="1093.5" y="555.4" width="12.3" height="9.3" fill="rgb(194,194,205)"/></g></g><g filter="url(#bl)"><clipPath id="cp246"><rect x="1175.4" y="555.5" width="29.6" height="18.1" rx="6.0"/></clipPath><g clip-path="url(#cp246)"><rect x="1175.4" y="555.5" width="12.3" height="9.3" fill="rgb(189,189,189)"/><rect x="1187.4" y="555.5" width="12.3" height="9.3" fill="rgb(201,201,201)"/><rect x="1199.4" y="555.5" width="12.3" height="9.3" fill="rgb(187,187,187)"/><rect x="1175.4" y="564.5" width="12.3" height="9.3" fill="rgb(192,192,192)"/><rect x="1187.4" y="564.5" width="12.3" height="9.3" fill="rgb(210,210,210)"/><rect x="1199.4" y="564.5" width="12.3" height="9.3" fill="rgb(195,195,195)"/><rect x="1175.4" y="573.5" width="12.3" height="9.3" fill="rgb(190,190,190)"/><rect x="1187.4" y="573.5" width="12.3" height="9.3" fill="rgb(209,209,209)"/><rect x="1199.4" y="573.5" width="12.3" height="9.3" fill="rgb(193,193,193)"/></g></g><g filter="url(#bl)"><clipPath id="cp257"><rect x="1051.5" y="599.5" width="51.5" height="21.9" rx="5.0"/></clipPath><g clip-path="url(#cp257)"><rect x="1051.5" y="599.5" width="12.3" height="9.3" fill="rgb(203,203,214)"/><rect x="1063.5" y="599.5" width="12.3" height="9.3" fill="rgb(203,203,214)"/><rect x="1075.5" y="599.5" width="12.3" height="9.3" fill="rgb(206,206,217)"/><rect x="1087.5" y="599.5" width="12.3" height="9.3" fill="rgb(193,193,204)"/><rect x="1099.5" y="599.5" width="12.3" height="9.3" fill="rgb(196,196,207)"/><rect x="1051.5" y="608.5" width="12.3" height="9.3" fill="rgb(205,205,216)"/><rect x="1063.5" y="608.5" width="12.3" height="9.3" fill="rgb(203,203,214)"/><rect x="1075.5" y="608.5" width="12.3" height="9.3" fill="rgb(208,208,219)"/><rect x="1087.5" y="608.5" width="12.3" height="9.3" fill="rgb(199,199,210)"/><rect x="1099.5" y="608.5" width="12.3" height="9.3" fill="rgb(195,195,206)"/><rect x="1051.5" y="617.5" width="12.3" height="9.3" fill="rgb(217,217,228)"/><rect x="1063.5" y="617.5" width="12.3" height="9.3" fill="rgb(204,204,215)"/><rect x="1075.5" y="617.5" width="12.3" height="9.3" fill="rgb(208,208,219)"/><rect x="1087.5" y="617.5" width="12.3" height="9.3" fill="rgb(199,199,210)"/><rect x="1099.5" y="617.5" width="12.3" height="9.3" fill="rgb(213,213,224)"/></g></g><g filter="url(#bl)"><clipPath id="cp274"><rect x="959.8" y="621.4" width="59.4" height="22.0" rx="6.0"/></clipPath><g clip-path="url(#cp274)"><rect x="959.8" y="621.4" width="12.3" height="9.3" fill="rgb(202,202,202)"/><rect x="971.8" y="621.4" width="12.3" height="9.3" fill="rgb(200,200,200)"/><rect x="983.8" y="621.4" width="12.3" height="9.3" fill="rgb(210,210,210)"/><rect x="995.8" y="621.4" width="12.3" height="9.3" fill="rgb(201,201,201)"/><rect x="1007.8" y="621.4" width="12.3" height="9.3" fill="rgb(196,196,196)"/><rect x="959.8" y="630.4" width="12.3" height="9.3" fill="rgb(193,193,193)"/><rect x="971.8" y="630.4" width="12.3" height="9.3" fill="rgb(191,191,191)"/><rect x="983.8" y="630.4" width="12.3" height="9.3" fill="rgb(194,194,194)"/><rect x="995.8" y="630.4" width="12.3" height="9.3" fill="rgb(193,193,193)"/><rect x="1007.8" y="630.4" width="12.3" height="9.3" fill="rgb(196,196,196)"/><rect x="959.8" y="639.4" width="12.3" height="9.3" fill="rgb(210,210,210)"/><rect x="971.8" y="639.4" width="12.3" height="9.3" fill="rgb(196,196,196)"/><rect x="983.8" y="639.4" width="12.3" height="9.3" fill="rgb(189,189,189)"/><rect x="995.8" y="639.4" width="12.3" height="9.3" fill="rgb(204,204,204)"/><rect x="1007.8" y="639.4" width="12.3" height="9.3" fill="rgb(215,215,215)"/></g></g><g filter="url(#bl)"><clipPath id="cp291"><rect x="1088.9" y="637.0" width="38.8" height="19.3" rx="4.0"/></clipPath><g clip-path="url(#cp291)"><rect x="1088.9" y="637.0" width="12.3" height="9.3" fill="rgb(198,198,198)"/><rect x="1100.9" y="637.0" width="12.3" height="9.3" fill="rgb(185,185,185)"/><rect x="1112.9" y="637.0" width="12.3" height="9.3" fill="rgb(188,188,188)"/><rect x="1124.9" y="637.0" width="12.3" height="9.3" fill="rgb(189,189,189)"/><rect x="1088.9" y="646.0" width="12.3" height="9.3" fill="rgb(180,180,180)"/><rect x="1100.9" y="646.0" width="12.3" height="9.3" fill="rgb(184,184,184)"/><rect x="1112.9" y="646.0" width="12.3" height="9.3" fill="rgb(193,193,193)"/><rect x="1124.9" y="646.0" width="12.3" height="9.3" fill="rgb(197,197,197)"/><rect x="1088.9" y="655.0" width="12.3" height="9.3" fill="rgb(191,191,191)"/><rect x="1100.9" y="655.0" width="12.3" height="9.3" fill="rgb(199,199,199)"/><rect x="1112.9" y="655.0" width="12.3" height="9.3" fill="rgb(198,198,198)"/><rect x="1124.9" y="655.0" width="12.3" height="9.3" fill="rgb(190,190,190)"/></g></g><g filter="url(#bl)"><clipPath id="cp305"><rect x="899.9" y="479.8" width="37.1" height="17.9" rx="2.0"/></clipPath><g clip-path="url(#cp305)"><rect x="899.9" y="479.8" width="12.3" height="9.3" fill="rgb(80,45,8)"/><rect x="911.9" y="479.8" width="12.3" height="9.3" fill="rgb(98,63,26)"/><rect x="923.9" y="479.8" width="12.3" height="9.3" fill="rgb(92,57,20)"/><rect x="935.9" y="479.8" width="12.3" height="9.3" fill="rgb(95,60,23)"/><rect x="899.9" y="488.8" width="12.3" height="9.3" fill="rgb(96,61,24)"/><rect x="911.9" y="488.8" width="12.3" height="9.3" fill="rgb(97,62,25)"/><rect x="923.9" y="488.8" width="12.3" height="9.3" fill="rgb(99,64,27)"/><rect x="935.9" y="488.8" width="12.3" height="9.3" fill="rgb(77,42,5)"/></g></g></svg><div class="a" style="left:774.0px;top:389.0px;font-size:12.5px;line-height:1;color:#222;white-space:nowrap;font-family:'Liberation Sans',sans-serif;"><i>叶</i></div><div class="a" style="left:775.0px;top:407.0px;font-size:13.5px;line-height:1;color:#222;white-space:nowrap;font-family:'Liberation Sans',sans-serif;"><i>根</i></div><div class="a" style="left:995.0px;top:411.0px;font-size:12.0px;line-height:1;color:#222;white-space:nowrap;font-family:'Liberation Sans',sans-serif;transform:scaleX(.85);transform-origin:0 0">XA</div><div class="a" style="left:1037.0px;top:419.0px;font-size:13.0px;line-height:1;color:#333;white-space:nowrap;font-family:'Liberation Sans',sans-serif;"><i>出</i><i>汽</i><i>侧</i></div><div class="a" style="left:1002.0px;top:551.0px;font-size:12.0px;line-height:1;color:#222;white-space:nowrap;font-family:'Liberation Sans',sans-serif;transform:scaleX(.85);transform-origin:0 0">XA</div><div class="a" style="left:1100.0px;top:537.0px;font-size:13.0px;line-height:1;color:#333;white-space:nowrap;font-family:'Liberation Sans',sans-serif;"><i>全</i><i>周</i></div><div class="a" style="left:1030.0px;top:637.0px;font-size:14.0px;line-height:1;color:#333;white-space:nowrap;font-family:'Liberation Sans',sans-serif;"><i>有</i><i>效</i><i>长</i><i>度</i></div><div class="a" style="left:946.0px;top:402.0px;font-size:12.5px;line-height:1;color:#222;white-space:nowrap;font-family:'Liberation Sans',sans-serif;transform:rotate(-90deg) scaleY(1.4);transform-origin:0 0"><i>两</i><i>侧</i></div><div class="a" style="left:874.0px;top:586.0px;font-size:12.5px;line-height:1;color:#222;white-space:nowrap;font-family:'Liberation Sans',sans-serif;transform:rotate(-90deg) scaleY(1.4);transform-origin:0 0"><i>两</i><i>侧</i></div>
<svg class="a" style="left:570px;top:708px" width="40" height="38"><g transform="translate(-570,-708)"><path d="M601.5 715.5 H585" stroke="#3a3af0" stroke-width="1.2"/><circle cx="585" cy="715.3" r="1.4" fill="#3a3af0"/><path d="M601.5 715.5 L596 721" stroke="#30d030" stroke-width="1.2"/><circle cx="596.5" cy="720.5" r="1.2" fill="#30d030"/><path d="M601.5 715.5 L602 731" stroke="#f04040" stroke-width="1.2"/><circle cx="602" cy="731.5" r="1.3" fill="#f04040"/><text x="574" y="717" font-size="5" fill="#7070f0" font-family="Liberation Sans">Z</text><text x="600.5" y="741" font-size="5" fill="#f07070" font-family="Liberation Sans">X</text><text x="593" y="724" font-size="4" fill="#60d060" font-family="Liberation Sans">Y</text></g></svg>
<div class="a" style="left:855px;top:714px;width:360px;height:25px;background:#f8f8f8;border-radius:4px"></div>
<div class="a" style="left:856.5px;top:730px;width:30px;text-align:center;font-size:4.5px;line-height:6px;color:#777;white-space:nowrap">渲染</div>
<div class="a" style="left:887.5px;top:730px;width:30px;text-align:center;font-size:4.5px;line-height:6px;color:#777;white-space:nowrap">透视图</div>
<div class="a" style="left:918.5px;top:730px;width:30px;text-align:center;font-size:4.5px;line-height:6px;color:#777;white-space:nowrap">视图</div>
<div class="a" style="left:949.5px;top:730px;width:30px;text-align:center;font-size:4.5px;line-height:6px;color:#777;white-space:nowrap">批注</div>
<div class="a" style="left:980.5px;top:730px;width:30px;text-align:center;font-size:4.5px;line-height:6px;color:#777;white-space:nowrap">测量</div>
<div class="a" style="left:1011.5px;top:730px;width:30px;text-align:center;font-size:4.5px;line-height:6px;color:#777;white-space:nowrap">爆炸</div>
<div class="a" style="left:1042.5px;top:730px;width:30px;text-align:center;font-size:4.5px;line-height:6px;color:#777;white-space:nowrap">剖切</div>
<div class="a" style="left:1073.5px;top:730px;width:30px;text-align:center;font-size:4.5px;line-height:6px;color:#777;white-space:nowrap">保存</div>
<div class="a" style="left:1104.5px;top:730px;width:30px;text-align:center;font-size:4.5px;line-height:6px;color:#777;white-space:nowrap">上一视图</div>
<div class="a" style="left:1135.5px;top:730px;width:30px;text-align:center;font-size:4.5px;line-height:6px;color:#777;white-space:nowrap">下一视图</div>
<div class="a" style="left:1166.5px;top:730px;width:30px;text-align:center;font-size:4.5px;line-height:6px;color:#777;white-space:nowrap">全屏显示</div>
<svg class="a" style="left:0;top:0;pointer-events:none" width="1200" height="800"><path d="M866 718 L877 716 V725 L866 727Z" fill="#3a8de8"/><path d="M866 718 V727 L868 726 V719Z" fill="#1e6fd0"/><g transform="translate(902.0,722.0)"><path d="M0 -6 L5 -3 V3 L0 6 L-5 3 V-3Z M-5 -3 L0 0 L5 -3 M0 0 V6" fill="none" stroke="#666" stroke-width="1"/><circle cx="-4.5" cy="-5.5" r="1.4" fill="#3a8ef0"/></g><g transform="translate(933.0,722.0)"><path d="M0 -6 L5 -3 V3 L0 6 L-5 3 V-3Z M-5 -3 L0 0 L5 -3 M0 0 V6" fill="none" stroke="#666" stroke-width="1"/></g><rect x="958" y="716.5" width="12" height="9" fill="none" stroke="#777" stroke-width="1"/><text x="961" y="724" font-size="7" fill="#3a8ef0" font-family="Liberation Sans">A</text><path d="M990 727 L999 717 L1001.5 719.5 L992.5 729.5Z" fill="none" stroke="#777" stroke-width="1"/><circle cx="1026.5" cy="722" r="5.5" fill="none" stroke="#777" stroke-width="1"/><path d="M1021.5 719 L1026.5 722 L1031.5 719 M1026.5 722 V727" fill="none" stroke="#777" stroke-width="1"/><g transform="translate(1057.5,722.0)"><path d="M0 -6 L5 -3 V3 L0 6 L-5 3 V-3Z" fill="#fff" stroke="#555" stroke-width="1"/><path d="M-5 -3 L0 0 V6 L-5 3Z" fill="#2a7ae0"/></g><path d="M1083 716.5 H1091 L1094 719.5 V728 H1083Z" fill="none" stroke="#777" stroke-width="1"/><path d="M1085 717 H1091 V720 H1085Z" fill="#8ab8f0"/><path d="M1086 723.5 H1091 M1086 725.5 H1089" stroke="#777" stroke-width="0.8"/><g transform="translate(1119.0,722.0)"><path d="M0 -6 L5 -3 V3 L0 6 L-5 3 V-3Z M-5 -3 L0 0 L5 -3 M0 0 V6" fill="none" stroke="#666" stroke-width="1"/><circle cx="-4.5" cy="-5.5" r="1.4" fill="#3a8ef0"/></g><g transform="translate(1150.5,722.0)"><path d="M0 -6 L5 -3 V3 L0 6 L-5 3 V-3Z M-5 -3 L0 0 L5 -3 M0 0 V6" fill="none" stroke="#999" stroke-width="1"/><circle cx="5.0" cy="-5.5" r="1.4" fill="#3a8ef0"/></g><path d="M1175 719 V716 H1178 M1183 716 H1186 V719 M1186 725 V728 H1183 M1178 728 H1175 V725" fill="none" stroke="#777" stroke-width="1"/></svg>
<div class="a" style="left:141px;top:770px;width:1059px;height:30px;background:linear-gradient(180deg,#f0f0f4,#fff 6px)"></div>
<div class="t" style="left:732px;top:784px;color:#444;font-size:12px"><b><i>登</i><i>录</i><i>用</i><i>户</i>:</b> <span style="color:#555"><i>系</i><i>统</i><i>管</i><i>理</i><i>员</i></span>&nbsp;&nbsp;<b><i>当</i><i>前</i><i>时</i><i>间</i>:</b> <span style="color:#555">2025-07-21 18:18:01</span></div>
</div></body></html>
